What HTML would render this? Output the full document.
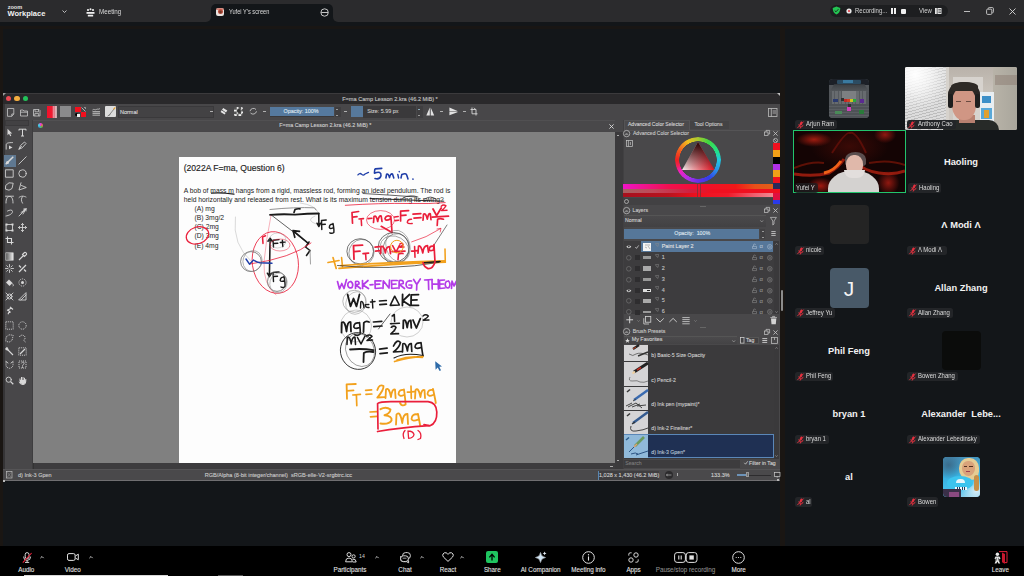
<!DOCTYPE html>
<html><head><meta charset="utf-8">
<style>
*{box-sizing:border-box;margin:0;padding:0}
html,body{width:1024px;height:576px;overflow:hidden;background:#131619;font-family:"Liberation Sans",sans-serif;color:#ddd}
.a{position:absolute}
.t{position:absolute;white-space:nowrap;line-height:1}
.tag{height:9.5px;background:#232528;border-radius:2.5px}
.tag .t{font-size:6.5px;color:#dcdcdc;transform:scaleX(0.92);transform-origin:0 0}
.gname{position:absolute;white-space:nowrap;line-height:1;font-size:9.3px;font-weight:bold;color:#f2f2f2;transform:translate(-50%,-42%)}
.tb{position:absolute;white-space:nowrap;line-height:1;font-size:6.3px;color:#ececec;transform:translateX(-50%);-webkit-text-stroke:0.08px currentColor}
.k{position:absolute;white-space:nowrap;line-height:1;font-size:5px;color:#d4d4d4;-webkit-text-stroke:0.12px currentColor}
svg{overflow:visible}
</style></head><body>
<!-- ZOOM TOP BAR -->
<div class="a" style="left:0;top:0;width:1024px;height:22px;background:#2b2b2d"></div>
<div class="t" style="left:7.8px;top:4.6px;font-size:5.6px;color:#e4e4e4;font-weight:bold;letter-spacing:-0.1px">zoom</div>
<div class="t" style="left:7.6px;top:10.2px;font-size:7.5px;color:#f2f2f2;font-weight:bold">Workplace</div>
<svg class="a" style="left:62px;top:10px" width="5" height="3" viewBox="0 0 5 3"><path d="M0.5 0.5 L2.5 2.5 L4.5 0.5" stroke="#cfcfcf" stroke-width="0.9" fill="none"/></svg>
<!-- meeting icon -->
<svg class="a" style="left:85.5px;top:7.5px" width="9" height="9" viewBox="0 0 9 9">
<circle cx="2" cy="2" r="1.1" fill="#eee"/><circle cx="7" cy="2" r="1.1" fill="#eee"/><circle cx="4.5" cy="1.2" r="1" fill="#eee"/>
<path d="M0.5 4 H8.5 V5.8 H0.5Z" fill="#eee"/><rect x="1.8" y="6.7" width="5.4" height="1.8" rx="0.6" fill="#eee"/></svg>
<div class="t" style="left:98.7px;top:9px;font-size:6.8px;color:#dadada;transform:scaleX(0.92);transform-origin:0 0">Meeting</div>
<!-- tab -->
<div class="a" style="left:211px;top:4px;width:122px;height:22px;background:#131619;border-radius:5px 5px 0 0"></div>
<div class="a" style="left:206px;top:17px;width:5px;height:5px;background:#131619"></div>
<div class="a" style="left:201px;top:12px;width:10px;height:10px;background:#2b2b2d;border-radius:0 0 5px 0"></div>
<div class="a" style="left:333px;top:17px;width:5px;height:5px;background:#131619"></div>
<div class="a" style="left:333px;top:12px;width:10px;height:10px;background:#2b2b2d;border-radius:0 0 0 5px"></div>
<div class="a" style="left:216px;top:7.8px;width:8px;height:8.4px;border-radius:2px;background:#e8e2de;overflow:hidden"><div class="a" style="left:1.5px;top:1.5px;width:5px;height:5px;border-radius:50%;background:radial-gradient(circle at 50% 60%,#5a3020 0,#b84a3a 50%,#d88070 100%)"></div><div class="a" style="left:0;top:0;width:8px;height:2px;background:#c85040;opacity:0.6"></div></div>
<div class="t" style="left:228.7px;top:8.4px;font-size:7px;color:#dcdcdc;transform:scaleX(0.81);transform-origin:0 0">Yufei Y's screen</div>
<svg class="a" style="left:320px;top:8px" width="9" height="9" viewBox="0 0 9 9"><circle cx="4.6" cy="4.5" r="3.7" stroke="#d8d8d8" stroke-width="0.9" fill="none"/><path d="M1.2 4.5 H8" stroke="#d8d8d8" stroke-width="0.9"/></svg>
<!-- recording pill -->
<div class="a" style="left:830px;top:4.7px;width:118px;height:12px;background:#1d1e20;border-radius:6px"></div>
<svg class="a" style="left:832px;top:6.2px" width="9" height="9" viewBox="0 0 9 9"><path d="M4.5 0.4 L8.3 1.9 C8.3 5.2 6.8 7.4 4.5 8.6 C2.2 7.4 0.7 5.2 0.7 1.9Z" fill="#23c552"/><path d="M2.7 4.6 L4 5.8 L6.4 3.2" stroke="#1d1e20" stroke-width="0.9" fill="none"/></svg>
<svg class="a" style="left:846px;top:8px" width="6" height="6" viewBox="0 0 6 6"><circle cx="3" cy="3" r="2.6" fill="#e8e8e8"/><circle cx="3" cy="3" r="1" fill="#e0303a"/></svg>
<div class="t" style="left:855.2px;top:7.6px;font-size:6.3px;color:#d4d4d4;transform:scaleX(0.95);transform-origin:0 0">Recording...</div>
<div class="a" style="left:891px;top:8px;width:2px;height:6px;background:#f0f0f0"></div>
<div class="a" style="left:894.3px;top:8px;width:2px;height:6px;background:#f0f0f0"></div>
<div class="a" style="left:901px;top:8.5px;width:5.3px;height:5.3px;background:#f0f0f0;border-radius:1px"></div>
<div class="t" style="left:919px;top:7.7px;font-size:6.3px;color:#d4d4d4;transform:scaleX(0.95);transform-origin:0 0">View</div>
<svg class="a" style="left:935px;top:8px" width="7" height="6" viewBox="0 0 7 6"><rect x="0" y="0" width="6.5" height="6" fill="#e4e4e4"/><path d="M2.2 0 V6 M3.4 1.5 H6 M3.4 3 H6 M3.4 4.5 H6" stroke="#1d1e20" stroke-width="0.6"/></svg>
<div class="a" style="left:964px;top:10.5px;width:6px;height:1px;background:#bdbdbd"></div>
<svg class="a" style="left:985.5px;top:7px" width="8" height="8" viewBox="0 0 8 8"><rect x="0.6" y="2.2" width="5.2" height="5.2" rx="1" stroke="#d0d0d0" stroke-width="0.9" fill="none"/><path d="M2.2 1.9 V1.6 A1 1 0 0 1 3.2 0.6 H6.4 A1 1 0 0 1 7.4 1.6 V4.8 A1 1 0 0 1 6.4 5.8" stroke="#d0d0d0" stroke-width="0.9" fill="none"/></svg>
<svg class="a" style="left:1009px;top:7.5px" width="7" height="7" viewBox="0 0 7 7"><path d="M0.5 0.5 L6.5 6.5 M6.5 0.5 L0.5 6.5" stroke="#d8d8d8" stroke-width="0.9"/></svg>

<!-- share frame strips -->
<div class="a" style="left:0;top:26.4px;width:1024px;height:2.6px;background:#191614"></div>
<div class="a" style="left:0;top:26px;width:3px;height:520px;background:#1a1613"></div>
<div class="a" style="left:780px;top:26px;width:5px;height:520px;background:#1a1613"></div>
<div class="a" style="left:781.2px;top:290px;width:2px;height:21px;background:#8c8c8c;border-radius:1px"></div>
<div class="a" style="left:3px;top:93px;width:777px;height:388px;background:#484749"></div>
<div class="a" style="left:3px;top:93px;width:777px;height:11px;background:#2a292b;border-top:1px solid #3b3a3c"></div>
<div class="a" style="left:3px;top:93px;width:3px;height:3px;background:#9a9a9a;clip-path:polygon(0 0,100% 0,0 100%)"></div>
<div class="a" style="left:777px;top:93px;width:3px;height:3px;background:#bdbdbd;clip-path:polygon(0 0,100% 0,100% 100%)"></div>
<div class="a" style="left:6.1000000000000005px;top:96px;width:5.4px;height:5.4px;border-radius:50%;background:#ec4a55"></div>
<div class="a" style="left:14.3px;top:96px;width:5.4px;height:5.4px;border-radius:50%;background:#f4ae40"></div>
<div class="a" style="left:22.5px;top:96px;width:5.4px;height:5.4px;border-radius:50%;background:#22c25a"></div>
<div class="k" style="left:342.2px;top:96.6px;font-size:5.6px;color:#c4c4c4">F=ma Camp Lesson 2.kra (46.2 MiB) *</div>
<svg class="a" style="left:7px;top:107.5px" width="7.5" height="9" viewBox="0 0 7.5 9"><path d="M0.5 0.5 H6.8 V6 L4.8 8.3 H0.5Z M6.8 6 H4.8 V8.3" stroke="#c8c8c8" stroke-width="0.8" fill="none"/></svg>
<svg class="a" style="left:20px;top:108.5px" width="8" height="7.5" viewBox="0 0 8 7.5"><path d="M0.5 1 H3 L4 2 H7.5 V7 H0.5Z M0.5 3.2 H7.5" stroke="#c8c8c8" stroke-width="0.8" fill="none"/></svg>
<svg class="a" style="left:33px;top:108.5px" width="7.5" height="7.5" viewBox="0 0 7.5 7.5"><path d="M0.5 0.5 H6 L7 1.5 V7 H0.5Z M2 0.5 V2.8 H5.5 V0.5 M1.8 7 V4.6 H5.7 V7" stroke="#c8c8c8" stroke-width="0.8" fill="none"/></svg>
<div class="a" style="left:46.5px;top:105.6px;width:10.8px;height:12px;background:repeating-linear-gradient(90deg,rgba(255,255,255,0) 0 1.6px,rgba(255,255,255,0.25) 1.6px 2.2px),linear-gradient(90deg,#f0102a 0,#f01a30 45%,#e07080 70%,#c8b8b8 100%)"></div>
<div class="a" style="left:60px;top:106.3px;width:10.8px;height:11px;background:#8a8a8c"></div>
<div class="a" style="left:75px;top:106.5px;width:5.5px;height:5.5px;background:#f2101e"></div>
<div class="a" style="left:80.5px;top:111.8px;width:5.7px;height:5.5px;background:#f2101e"></div>
<div class="a" style="left:75px;top:112.5px;width:3px;height:3px;background:#000;border-radius:50%"></div>
<div class="a" style="left:77px;top:114px;width:3px;height:3px;background:#eee"></div>
<svg class="a" style="left:81px;top:106.5px" width="5" height="5" viewBox="0 0 5 5"><path d="M0.5 0.5 L4.5 4.5" stroke="#bbb" stroke-width="0.9"/><path d="M3 0.5 H4.5 V2" stroke="#bbb" stroke-width="0.7" fill="none"/></svg>
<svg class="a" style="left:91.5px;top:107px" width="8.5" height="9" viewBox="0 0 8.5 9"><path d="M0.5 3 C2 1.5 3 3.5 4.3 2.5 C5.5 1.5 6.5 3 8 1.5" stroke="#c8c8c8" stroke-width="0.8" fill="none"/><rect x="0.5" y="4" width="7.5" height="1.3" fill="#aaa"/><rect x="0.5" y="5.8" width="7.5" height="1.3" fill="#aaa"/><rect x="0.5" y="7.6" width="7.5" height="1.3" fill="#999"/></svg>
<div class="a" style="left:105px;top:106px;width:11.2px;height:11.2px;background:#dcdcdc;border-radius:1px"></div>
<svg class="a" style="left:106px;top:106.5px" width="10" height="10" viewBox="0 0 10 10"><path d="M2.5 9 L8.8 1" stroke="#7a7a7a" stroke-width="0.9"/><path d="M7.6 2.4 L9.3 0.4" stroke="#e8a030" stroke-width="1.2"/><path d="M1.5 9.2 C2.5 8 3.5 8.5 4 7.5" stroke="#555" stroke-width="0.6" fill="none"/></svg>
<div class="a" style="left:117.5px;top:105.5px;width:96.5px;height:12.3px;background:#434244;border:0.5px solid #3a393b"></div>
<div class="k" style="left:120px;top:110px;font-size:5.5px;color:#dcdcdc">Normal</div>
<div class="a" style="left:209.5px;top:111px;width:3px;height:0.9px;background:#b0b0b0"></div>
<svg class="a" style="left:219.5px;top:107px" width="8" height="8" viewBox="0 0 8 8"><path d="M3.2 1 L7.3 3.6 L4.6 7.5 L0.6 5Z" fill="#e6e6e6"/><path d="M2 3.2 L6 5.8" stroke="#484749" stroke-width="0.8"/></svg>
<div class="a" style="left:234px;top:106.8px;width:9px;height:9px;background:conic-gradient(#eee 0 25%,#555 0 50%,#eee 0 75%,#555 0);background-size:4.5px 4.5px;border-radius:1.5px"></div>
<div class="a" style="left:236.5px;top:109.3px;width:4px;height:4px;border-radius:50%;background:#333"></div>
<svg class="a" style="left:248.5px;top:107px" width="8.5" height="8.5" viewBox="0 0 8.5 8.5"><path d="M7 2.5 A3.5 3.5 0 0 0 1 4.2 M1.5 6 A3.5 3.5 0 0 0 7.5 4.3" stroke="#c4c4c4" stroke-width="0.9" fill="none"/></svg>
<div class="a" style="left:263px;top:111px;width:3px;height:0.9px;background:#b0b0b0"></div>
<div class="a" style="left:270.4px;top:106.7px;width:63.5px;height:10.5px;background:#55799e;border-bottom:0.5px solid #3a393b"></div>
<div class="k" style="left:283.5px;top:109.2px;font-size:5.4px;color:#dde6ee">Opacity: 100%</div>
<div class="a" style="left:334.5px;top:106.7px;width:6px;height:10.5px;background:#3f3e40"></div>
<div class="a" style="left:336.3px;top:108.5px;width:2px;height:0.7px;background:#999"></div><div class="a" style="left:336.3px;top:115px;width:2px;height:0.7px;background:#999"></div>
<div class="a" style="left:344px;top:111px;width:3px;height:0.9px;background:#b0b0b0"></div>
<div class="a" style="left:351px;top:106.3px;width:11.8px;height:11px;background:#57799c"></div>
<div class="a" style="left:363px;top:105.7px;width:53px;height:12px;background:#3a393b"></div>
<div class="k" style="left:367.2px;top:109px;font-size:5.4px;color:#c9c9c9">Size: 5.99 px</div>
<div class="a" style="left:416.5px;top:105.7px;width:6px;height:12px;background:#3f3e40"></div>
<div class="a" style="left:418.4px;top:108.5px;width:2px;height:0.7px;background:#8ab"></div><div class="a" style="left:418.4px;top:114.7px;width:2px;height:0.7px;background:#999"></div>
<svg class="a" style="left:426px;top:107px" width="8.5" height="9" viewBox="0 0 8.5 9"><path d="M3.8 0.5 L0.3 8.5 H3.8Z M4.7 0.5 L8.2 8.5 H4.7Z" fill="#e2e2e2"/></svg>
<div class="a" style="left:440px;top:111px;width:3px;height:0.9px;background:#b0b0b0"></div>
<svg class="a" style="left:448.7px;top:107.3px" width="8.7" height="8.5" viewBox="0 0 8.7 8.5"><path d="M0.4 0.4 L8.5 3.9 V4.4 H0.4Z M0.4 4.9 H8.5 V5.2 L0.4 8.3Z" fill="#e2e2e2"/></svg>
<div class="a" style="left:462.5px;top:111px;width:3px;height:0.9px;background:#b0b0b0"></div>
<svg class="a" style="left:469.8px;top:107px" width="8" height="9" viewBox="0 0 8 9"><path d="M2 0.5 V6.8 H7.5 M0.5 2.5 H6 V8.5 M4 0.8 L5.5 2.3" stroke="#d6d6d6" stroke-width="0.9" fill="none"/></svg>
<svg class="a" style="left:767.5px;top:107.5px" width="9.5" height="9" viewBox="0 0 9.5 9"><rect x="0.5" y="0.5" width="8.5" height="8" stroke="#bcbcbc" stroke-width="0.8" fill="none"/><path d="M3.3 0.5 V8.5 M4.6 3 H8 M4.6 5 H8" stroke="#bcbcbc" stroke-width="0.8"/></svg>
<div class="a" style="left:3px;top:104px;width:1.5px;height:377px;background:#353436"></div>
<div class="a" style="left:5.3px;top:119.7px;width:24px;height:6.5px;background:#424143;border:0.5px solid #3a393b"></div>
<div class="a" style="left:32px;top:119.5px;width:0.8px;height:350px;background:#3e3d3f"></div>
<div class="a" style="left:32.5px;top:119.7px;width:582px;height:11.8px;background:#49484a;border-top:0.5px solid #515052"></div>
<div class="a" style="left:37.8px;top:122.6px;width:5.4px;height:5.4px;border-radius:50%;background:conic-gradient(#e040e0,#f06060,#60c040,#40a0e0,#40e0e0,#e040e0)"></div>
<div class="k" style="left:279.3px;top:123.4px;font-size:5.4px;color:#cfcfcf">F=ma Camp Lesson 2.kra (46.2 MiB) *</div>
<svg class="a" style="left:608.5px;top:123.5px" width="5" height="5" viewBox="0 0 5 5"><path d="M0.4 0.4 L4.6 4.6 M4.6 0.4 L0.4 4.6" stroke="#dcdcdc" stroke-width="0.9"/></svg>
<div class="a" style="left:32.5px;top:131.5px;width:582px;height:331.5px;background:#808080"></div>
<div class="a" style="left:614.5px;top:131.5px;width:8px;height:337px;background:#3b3a3c"></div>
<div class="a" style="left:616.8px;top:134.6px;width:2.5px;height:0.8px;background:#aaa"></div>
<div class="a" style="left:616.8px;top:459.5px;width:2.5px;height:0.8px;background:#aaa"></div>
<div class="a" style="left:32.5px;top:463px;width:582px;height:6px;background:#3d3c3e"></div>
<div class="a" style="left:33px;top:463px;width:1px;height:6px;background:#333"></div>
<div class="a" style="left:610.3px;top:465.8px;width:2.5px;height:0.8px;background:#aaa"></div>
<div class="a" style="left:3px;top:469px;width:777px;height:11.5px;background:#4a494b;border-top:0.5px solid #555456"></div>
<div class="a" style="left:3px;top:480.3px;width:777px;height:1px;background:#706f71"></div>
<svg class="a" style="left:6px;top:471px" width="6.5" height="7.5" viewBox="0 0 6.5 7.5"><rect x="0.4" y="0.4" width="5.6" height="6.6" stroke="#bbb" stroke-width="0.7" fill="none"/><path d="M1.5 1.5 L3.2 3.7 L5 1.5 M1.5 6 L3.2 3.7 L5 6" stroke="#999" stroke-width="0.5" fill="none"/></svg>
<div class="k" style="left:18px;top:472.5px;font-size:5.5px;color:#c8c8c8">d) Ink-3 Gpen</div>
<div class="k" style="left:204.7px;top:472.5px;font-size:5.55px;color:#c8c8c8">RGB/Alpha (8-bit integer/channel) &nbsp;sRGB-elle-V2-srgbtrc.icc</div>
<div class="a" style="left:597.5px;top:470.5px;width:61px;height:9px;background:#3f3e40;border-left:0.6px solid #5a86b0"></div>
<div class="k" style="left:599px;top:472.5px;font-size:5.5px;color:#d0d0d0">1,028 x 1,430 (46.2 MiB)</div>
<div class="a" style="left:665px;top:471px;width:8px;height:8px;border-radius:50%;background:#2c2b2d"></div>
<svg class="a" style="left:666px;top:473px" width="6" height="4" viewBox="0 0 6 4"><path d="M0.5 2 H5.5 M1.5 0.8 L0.5 2 L1.5 3.2" stroke="#ccc" stroke-width="0.6" fill="none"/></svg>
<div class="a" style="left:677px;top:473px;width:0.6px;height:3px;background:#aaa"></div>
<div class="k" style="left:711px;top:472.5px;font-size:5.5px;color:#d0d0d0">133.3%</div>
<div class="a" style="left:736.5px;top:474.6px;width:34px;height:1px;background:#2d2c2e"></div>
<div class="a" style="left:736.5px;top:474.4px;width:9px;height:1.3px;background:#6d93b8"></div>
<div class="a" style="left:745.5px;top:472.3px;width:3px;height:5px;background:#6a6a6c;border:0.5px solid #999"></div>
<svg class="a" style="left:774px;top:472px" width="6.5" height="6" viewBox="0 0 6.5 6"><rect x="0.4" y="0.4" width="5.6" height="4" stroke="#ccc" stroke-width="0.7" fill="#3a393b"/><path d="M3.2 4.4 V5.6" stroke="#ccc" stroke-width="0.7"/></svg>
<div class="a" style="left:777px;top:479px;width:2px;height:2px;background:#bbb"></div>
<div class="a" style="left:3px;top:479.5px;width:2px;height:2px;background:#bbb"></div>
<svg width="0" height="0" style="position:absolute"><defs><linearGradient id="gr"><stop offset="0" stop-color="#555"/><stop offset="1" stop-color="#eee"/></linearGradient></defs></svg>
<div class="a" style="left:3.8px;top:154.8px;width:11.8px;height:12px;background:#5f7891"></div>
<svg class="a" style="left:4.9px;top:128.0px" width="9" height="9" viewBox="0 0 9 9"><path d="M2.5 0.8 V7.3 L4 5.8 L5.3 8.3 L6.3 7.8 L5.1 5.4 H7.2Z" fill="#d8d8d8"/></svg>
<svg class="a" style="left:17.8px;top:128.0px" width="9" height="9" viewBox="0 0 9 9"><path d="M1 1.2 H8 M4.5 1.2 V8 M3 8 H6 M1 1.2 V2.6 M8 1.2 V2.6" stroke="#d8d8d8" stroke-width="1" fill="none"/></svg>
<svg class="a" style="left:4.9px;top:140.8px" width="9" height="9" viewBox="0 0 9 9"><path d="M1.2 8.2 V4 C1.2 2 3 1.6 7.5 1.6" stroke="#d8d8d8" stroke-width="0.85" fill="none" stroke-linecap="round" stroke-linejoin="round"/><path d="M4 4.5 L7.5 6.5 L4 8.3Z" fill="#d8d8d8"/></svg>
<svg class="a" style="left:17.8px;top:140.8px" width="9" height="9" viewBox="0 0 9 9"><path d="M1 8 L2.5 4.5 L6.5 1 L8 2.5 L4.5 6.5Z M1 8 L3.5 5.5" stroke="#d8d8d8" stroke-width="0.85" fill="none" stroke-linecap="round" stroke-linejoin="round"/></svg>
<svg class="a" style="left:4.9px;top:156.1px" width="9" height="9" viewBox="0 0 9 9"><path d="M1.2 7.8 L7.8 1.2" stroke="#d8d8d8" stroke-width="1.6" stroke-linecap="round"/><circle cx="2.5" cy="6.5" r="1.5" fill="#d8d8d8"/></svg>
<svg class="a" style="left:17.8px;top:156.1px" width="9" height="9" viewBox="0 0 9 9"><path d="M0.8 8.2 L8.2 0.8" stroke="#d8d8d8" stroke-width="0.85" fill="none" stroke-linecap="round" stroke-linejoin="round"/></svg>
<svg class="a" style="left:4.9px;top:169.1px" width="9" height="9" viewBox="0 0 9 9"><rect x="0.8" y="0.8" width="7.4" height="7.4" stroke="#d8d8d8" stroke-width="0.85" fill="none" stroke-linecap="round" stroke-linejoin="round"/></svg>
<svg class="a" style="left:17.8px;top:169.1px" width="9" height="9" viewBox="0 0 9 9"><circle cx="4.5" cy="4.5" r="3.7" stroke="#d8d8d8" stroke-width="0.85" fill="none" stroke-linecap="round" stroke-linejoin="round"/></svg>
<svg class="a" style="left:4.9px;top:182.0px" width="9" height="9" viewBox="0 0 9 9"><path d="M1 3.2 L4 0.8 L8.2 1.2 L7 6.5 L4 8.2 L0.8 7.2Z" stroke="#d8d8d8" stroke-width="0.85" fill="none" stroke-linecap="round" stroke-linejoin="round"/></svg>
<svg class="a" style="left:17.8px;top:182.0px" width="9" height="9" viewBox="0 0 9 9"><path d="M3 0.8 L1 8 L8.3 5.5 L3.5 3.5" stroke="#d8d8d8" stroke-width="0.85" fill="none" stroke-linecap="round" stroke-linejoin="round"/></svg>
<svg class="a" style="left:4.9px;top:194.9px" width="9" height="9" viewBox="0 0 9 9"><path d="M1 8 C1 3 2.5 1.5 4.5 1.5 C6.5 1.5 8 3 8 8 M0.5 1.2 H8.5" stroke="#d8d8d8" stroke-width="0.85" fill="none" stroke-linecap="round" stroke-linejoin="round"/></svg>
<svg class="a" style="left:17.8px;top:194.9px" width="9" height="9" viewBox="0 0 9 9"><path d="M1 2.5 C3 0.5 6 1 8 2 M4.5 1.6 C3 3.5 3 6 4.5 8.2" stroke="#d8d8d8" stroke-width="0.85" fill="none" stroke-linecap="round" stroke-linejoin="round"/></svg>
<svg class="a" style="left:4.9px;top:208.0px" width="9" height="9" viewBox="0 0 9 9"><path d="M1 8 C4 7.5 7.5 6 7.5 3.5 C7.5 1.5 4.5 1.8 2.5 3" stroke="#d8d8d8" stroke-width="0.85" fill="none" stroke-linecap="round" stroke-linejoin="round"/></svg>
<svg class="a" style="left:17.8px;top:208.0px" width="9" height="9" viewBox="0 0 9 9"><path d="M8 1 L1 8 M8 1 L3 4.5 M8 1 L5 6 M8 1 L5.5 2 M6 0.8 L8 1 L8 3" stroke="#d8d8d8" stroke-width="0.85" fill="none" stroke-linecap="round" stroke-linejoin="round"/></svg>
<svg class="a" style="left:4.9px;top:223.0px" width="9" height="9" viewBox="0 0 9 9"><rect x="1.5" y="1.5" width="6" height="6" stroke="#d8d8d8" stroke-width="0.85" fill="none" stroke-linecap="round" stroke-linejoin="round"/><rect x="0.5" y="0.5" width="2" height="2" fill="#d8d8d8"/><rect x="6.5" y="0.5" width="2" height="2" fill="#d8d8d8"/><rect x="0.5" y="6.5" width="2" height="2" fill="#d8d8d8"/><rect x="6.5" y="6.5" width="2" height="2" fill="#d8d8d8"/></svg>
<svg class="a" style="left:17.8px;top:223.0px" width="9" height="9" viewBox="0 0 9 9"><path d="M4.5 0.5 V8.5 M0.5 4.5 H8.5 M3.3 1.7 L4.5 0.5 L5.7 1.7 M3.3 7.3 L4.5 8.5 L5.7 7.3 M1.7 3.3 L0.5 4.5 L1.7 5.7 M7.3 3.3 L8.5 4.5 L7.3 5.7" stroke="#d8d8d8" stroke-width="0.85" fill="none" stroke-linecap="round" stroke-linejoin="round"/></svg>
<svg class="a" style="left:4.9px;top:236.1px" width="9" height="9" viewBox="0 0 9 9"><path d="M2.5 0.5 V6.5 H8.5 M0.5 2.5 H6.5 V8.5" stroke="#d8d8d8" stroke-width="1.1" fill="none"/></svg>
<svg class="a" style="left:4.9px;top:251.5px" width="9" height="9" viewBox="0 0 9 9"><rect x="0.8" y="0.8" width="7.4" height="7.4" fill="url(#gr)" stroke="#d8d8d8" stroke-width="0.6"/></svg>
<svg class="a" style="left:17.8px;top:251.5px" width="9" height="9" viewBox="0 0 9 9"><path d="M1 8 L5.5 3.5 M4.5 2.5 L6.5 0.5 C7.5 0 9 1.5 8.5 2.5 L6.5 4.5Z" stroke="#d8d8d8" stroke-width="1.1" fill="none"/></svg>
<svg class="a" style="left:4.9px;top:264.25px" width="9" height="9" viewBox="0 0 9 9"><path d="M4.5 0.5 V3 M4.5 6 V8.5 M0.5 4.5 H3 M6 4.5 H8.5 M1.7 1.7 L3 3 M7.3 7.3 L6 6 M7.3 1.7 L6 3 M1.7 7.3 L3 6" stroke="#d8d8d8" stroke-width="0.85" fill="none" stroke-linecap="round" stroke-linejoin="round"/></svg>
<svg class="a" style="left:17.8px;top:264.25px" width="9" height="9" viewBox="0 0 9 9"><path d="M1 8 L8 1 M1 1.5 L3 3.5 M6 5.5 L8 7.5" stroke="#d8d8d8" stroke-width="1.3" fill="none"/></svg>
<svg class="a" style="left:4.9px;top:277.5px" width="9" height="9" viewBox="0 0 9 9"><path d="M1 4.5 L4 1.5 L7.5 5 L4.5 8Z" fill="#d8d8d8"/><path d="M7.5 5.5 C8.5 7 8.5 8 7.8 8.3" stroke="#d8d8d8" stroke-width="0.9" fill="none"/></svg>
<svg class="a" style="left:17.8px;top:277.5px" width="9" height="9" viewBox="0 0 9 9"><circle cx="4.5" cy="4.5" r="3.6" stroke="#d8d8d8" stroke-width="0.85" fill="none" stroke-dasharray="1.1 0.9"/><circle cx="4.5" cy="4.5" r="1.5" fill="#d8d8d8"/></svg>
<svg class="a" style="left:4.9px;top:291.75px" width="9" height="9" viewBox="0 0 9 9"><path d="M1 1 L8 8 M8 1 L1 8" stroke="#d8d8d8" stroke-width="0.85" fill="none" stroke-linecap="round" stroke-linejoin="round"/><circle cx="4.5" cy="4.5" r="2.5" stroke="#d8d8d8" stroke-width="0.85" fill="none" stroke-linecap="round" stroke-linejoin="round"/></svg>
<svg class="a" style="left:17.8px;top:291.75px" width="9" height="9" viewBox="0 0 9 9"><path d="M1 8 H8 L8 1Z M3 8 L8 3" stroke="#d8d8d8" stroke-width="0.85" fill="none" stroke-linecap="round" stroke-linejoin="round"/></svg>
<svg class="a" style="left:4.9px;top:306.3px" width="9" height="9" viewBox="0 0 9 9"><path d="M3 8.3 L4.5 5 M2 4.5 L6.5 2 M5 0.8 L8 3.5 M2.5 3.5 L5.5 6.5" stroke="#d8d8d8" stroke-width="1.1" fill="none"/></svg>
<svg class="a" style="left:4.9px;top:321.3px" width="9" height="9" viewBox="0 0 9 9"><rect x="0.8" y="0.8" width="7.4" height="7.4" stroke="#d8d8d8" stroke-width="0.85" fill="none" stroke-dasharray="1.1 0.9"/></svg>
<svg class="a" style="left:17.8px;top:321.3px" width="9" height="9" viewBox="0 0 9 9"><circle cx="4.5" cy="4.5" r="3.7" stroke="#d8d8d8" stroke-width="0.85" fill="none" stroke-dasharray="1.1 0.9"/></svg>
<svg class="a" style="left:4.9px;top:334.1px" width="9" height="9" viewBox="0 0 9 9"><path d="M1 3.2 L4 0.8 L8.2 1.2 L7 6.5 L4 8.2 L0.8 7.2Z" stroke="#d8d8d8" stroke-width="0.85" fill="none" stroke-dasharray="1.1 0.9"/></svg>
<svg class="a" style="left:17.8px;top:334.1px" width="9" height="9" viewBox="0 0 9 9"><path d="M1.5 3 C2 0.5 6 0.5 7 3 C8 5 5.5 5 6 7 L7.5 8" stroke="#d8d8d8" stroke-width="0.85" fill="none" stroke-dasharray="1.1 0.9"/></svg>
<svg class="a" style="left:4.9px;top:347.3px" width="9" height="9" viewBox="0 0 9 9"><path d="M1 1 L3.5 3.5 M2 1 V0 M1 2 H0 M3.5 3.5 L8 8" stroke="#d8d8d8" stroke-width="1.1" fill="none"/><circle cx="2.2" cy="2.2" r="1.2" fill="#d8d8d8"/></svg>
<svg class="a" style="left:17.8px;top:347.3px" width="9" height="9" viewBox="0 0 9 9"><rect x="0.8" y="0.8" width="7.4" height="7.4" stroke="#d8d8d8" stroke-width="0.85" fill="none" stroke-dasharray="1.1 0.9"/><path d="M2 7 L7 2" stroke="#d8d8d8" stroke-width="1.2"/></svg>
<svg class="a" style="left:4.9px;top:360.1px" width="9" height="9" viewBox="0 0 9 9"><path d="M1 1.5 V5 C1 7 3 8.3 4.5 8.3 C6 8.3 8 7 8 5 V1.5" stroke="#d8d8d8" stroke-width="0.85" fill="none" stroke-dasharray="1.1 0.9"/><path d="M1 1.5 L3 3 M8 1.5 L6 3" stroke="#d8d8d8" stroke-width="0.85" fill="none" stroke-linecap="round" stroke-linejoin="round"/></svg>
<svg class="a" style="left:17.8px;top:360.1px" width="9" height="9" viewBox="0 0 9 9"><path d="M1 1 H8 V8 H1Z" stroke="#d8d8d8" stroke-width="0.85" fill="none" stroke-dasharray="1.1 0.9"/><path d="M3.5 3 C4 1.5 6.5 1.8 6 3.5 C5.5 4.8 4.5 4.8 4.5 6 M4.5 7 V7.5" stroke="#d8d8d8" stroke-width="0.85" fill="none" stroke-linecap="round" stroke-linejoin="round"/></svg>
<svg class="a" style="left:4.9px;top:375.8px" width="9" height="9" viewBox="0 0 9 9"><circle cx="3.7" cy="3.7" r="2.6" stroke="#d8d8d8" stroke-width="0.85" fill="none" stroke-linecap="round" stroke-linejoin="round"/><path d="M5.6 5.6 L8.3 8.3" stroke="#d8d8d8" stroke-width="1.3"/></svg>
<svg class="a" style="left:17.8px;top:375.8px" width="9" height="9" viewBox="0 0 9 9"><path d="M2 5 V2.5 M3.5 4.5 V1 M5 4.5 V1 M6.5 4.5 V1.8 M1.2 5.5 C1.5 7.5 3 8.5 5 8.5 C7 8.5 7.8 7 7.8 4.5 V3" stroke="#d8d8d8" stroke-width="1" fill="none"/><path d="M2 4 H7.8 V7 C7 8.5 3 8.5 2 7Z" fill="#d8d8d8"/></svg>
<div class="a" style="left:179px;top:157px;width:277px;height:306px;background:#fdfdfd"></div>
<div class="t" style="left:183.7px;top:164px;font-size:8.6px;color:#222;-webkit-text-stroke:0.15px #222">(2022A F=ma, Question 6)</div>
<div class="t" style="left:183.7px;top:187.7px;font-size:6.75px;color:#222">A bob of mass m hangs from a rigid, massless rod, forming an ideal pendulum. The rod is</div>
<div class="t" style="left:183.7px;top:197.1px;font-size:6.75px;color:#222">held horizontally and released from rest. What is its maximum tension during its swing?</div>
<div class="t" style="left:194.4px;top:206.00px;font-size:6.75px;color:#222">(A) mg</div>
<div class="t" style="left:194.4px;top:215.15px;font-size:6.75px;color:#222">(B) 3mg/2</div>
<div class="t" style="left:194.4px;top:224.30px;font-size:6.75px;color:#222">(C) 2mg</div>
<div class="t" style="left:194.4px;top:233.45px;font-size:6.75px;color:#222">(D) 3mg</div>
<div class="t" style="left:194.4px;top:242.60px;font-size:6.75px;color:#222">(E) 4mg</div>
<svg class="a" style="left:0;top:0;clip-path:inset(157px 568px 113px 179px)" width="1024" height="576" viewBox="0 0 1024 576"><path d="M357.9,174.9 Q360,172.5 361.5,174.2 Q363,176 365,174 L368.5,172.4" stroke="#1e3da8" stroke-width="1.30" fill="none" stroke-linecap="round" stroke-linejoin="round" opacity="1"/><path d="M381.8,168.4 L375.3,168.9 M374.8,169.4 L374.4,173.2 Q381.5,170.5 381,175.8 Q380,179.8 375,178.6" stroke="#1e3da8" stroke-width="1.56" fill="none" stroke-linecap="round" stroke-linejoin="round" opacity="1"/><path d="M385.9,178 L386.6,174.2 Q388.3,173 389.5,177.6 Q390.5,173.2 392.5,174 L393.8,178" stroke="#1e3da8" stroke-width="1.56" fill="none" stroke-linecap="round" stroke-linejoin="round" opacity="1"/><path d="M397.8,174.4 L398.6,178 M399.2,171.6 L399.3,171.7" stroke="#1e3da8" stroke-width="1.43" fill="none" stroke-linecap="round" stroke-linejoin="round" opacity="1"/><path d="M401,178 L401.8,174.4 Q406,172.8 406.7,175 L408,179" stroke="#1e3da8" stroke-width="1.56" fill="none" stroke-linecap="round" stroke-linejoin="round" opacity="1"/><path d="M412.9,179 L413,179.1" stroke="#1e3da8" stroke-width="1.56" fill="none" stroke-linecap="round" stroke-linejoin="round" opacity="1"/><path d="M211.5,193.2 Q222,192.5 234,194.2" stroke="#1b1b1b" stroke-width="1.17" fill="none" stroke-linecap="round" stroke-linejoin="round" opacity="1"/><path d="M363,193.5 Q390,195 416.4,197" stroke="#1b1b1b" stroke-width="0.69" fill="none" stroke-linecap="round" stroke-linejoin="round" opacity="1"/><path d="M370,198.5 Q405,200 443.8,201.2" stroke="#1b1b1b" stroke-width="0.92" fill="none" stroke-linecap="round" stroke-linejoin="round" opacity="1"/><path d="M403,198 Q410,194 418,197 M425,199 Q430,195 436,199" stroke="#1b1b1b" stroke-width="0.69" fill="none" stroke-linecap="round" stroke-linejoin="round" opacity="1"/><path d="M345.3,205.3 Q380,203 410,203.5 Q430,204 445.2,202.6" stroke="#ea1f3b" stroke-width="0.80" fill="none" stroke-linecap="round" stroke-linejoin="round" opacity="1"/><ellipse cx="197.5" cy="235.4" rx="11.5" ry="8.3" transform="rotate(-18 197.5 235.4)" stroke="#ea1f3b" stroke-width="1.2" fill="none" opacity="1"/><path d="M235.4,217 Q232,245 252,262" stroke="#8a8a8a" stroke-width="0.46" fill="none" stroke-linecap="round" stroke-linejoin="round" opacity="0.7"/><path d="M270,209.5 Q295,207 314.4,207.8 L316,210" stroke="#8a8a8a" stroke-width="0.92" fill="none" stroke-linecap="round" stroke-linejoin="round" opacity="1"/><path d="M294,212.5 L295,209.5 Q297,208.5 300,208.8" stroke="#1b1b1b" stroke-width="1.69" fill="none" stroke-linecap="round" stroke-linejoin="round" opacity="1"/><path d="M270,214.8 Q283,213.8 295,214.6 Q308,213.6 318.75,213.5" stroke="#1b1b1b" stroke-width="1.82" fill="none" stroke-linecap="round" stroke-linejoin="round" opacity="1"/><path d="M318.75,213.5 L318.9,226.2 M317,223.2 L318.9,226.5 L320.6,223.2" stroke="#1b1b1b" stroke-width="1.56" fill="none" stroke-linecap="round" stroke-linejoin="round" opacity="1"/><path d="M321.5,220.5 L321.8,229.5 M321.5,220.5 L326.2,220 M321.8,224.5 L325.3,224.2" stroke="#1b1b1b" stroke-width="1.43" fill="none" stroke-linecap="round" stroke-linejoin="round" opacity="1"/><path d="M333,224.3 Q329.5,223.5 329.3,227.5 Q330,229.3 333,227.8 M333,223.5 Q334.3,230 333.8,232.5 Q332,234 329.8,232.8" stroke="#1b1b1b" stroke-width="1.43" fill="none" stroke-linecap="round" stroke-linejoin="round" opacity="1"/><path d="M271,214.8 L308.3,243.4" stroke="#1b1b1b" stroke-width="0.69" fill="none" stroke-linecap="round" stroke-linejoin="round" opacity="1"/><path d="M293,230.6 L308.3,243.4 M293,230.6 L299.5,231.4 M293,230.6 L294.8,237.3" stroke="#1b1b1b" stroke-width="1.69" fill="none" stroke-linecap="round" stroke-linejoin="round" opacity="1"/><path d="M309,242 L305.5,247 L310,250.5 L306.5,255.5" stroke="#1b1b1b" stroke-width="1.56" fill="none" stroke-linecap="round" stroke-linejoin="round" opacity="1"/><path d="M310,250 L310.5,264" stroke="#8a8a8a" stroke-width="0.80" fill="none" stroke-linecap="round" stroke-linejoin="round" opacity="1"/><path d="M270.1,238.2 L269.4,276.4 M268,241.2 L270.1,238.2 L272.2,241.2 M267.4,273.2 L269.4,276.6 L271.5,273.2" stroke="#1b1b1b" stroke-width="1.56" fill="none" stroke-linecap="round" stroke-linejoin="round" opacity="1"/><path d="M273,240.3 L273.5,247 M273,240.3 L279,239.6 M273.5,243.5 L277.8,243.2 M280.3,242.5 L285.2,242.1 M282.4,240.2 L282.8,246.6" stroke="#1b1b1b" stroke-width="1.43" fill="none" stroke-linecap="round" stroke-linejoin="round" opacity="1"/><path d="M273,272.5 L273.5,281.5 M273,272.5 L279,272 M273.5,276.5 L277.5,276.2" stroke="#1b1b1b" stroke-width="1.43" fill="none" stroke-linecap="round" stroke-linejoin="round" opacity="1"/><path d="M284,277.2 Q280.5,276.5 280.2,280.5 Q281,282 284,281 M284,276.3 Q285.3,283 285,286.5 Q283,288.3 281,287" stroke="#1b1b1b" stroke-width="1.43" fill="none" stroke-linecap="round" stroke-linejoin="round" opacity="1"/><ellipse cx="275.3" cy="262.5" rx="23" ry="31" transform="rotate(-8 275.3 262.5)" stroke="#ea1f3b" stroke-width="0.8" fill="none" opacity="1"/><path d="M311,243 Q292,258 250,264" stroke="#ea1f3b" stroke-width="0.80" fill="none" stroke-linecap="round" stroke-linejoin="round" opacity="1"/><ellipse cx="280" cy="245" rx="10" ry="6" transform="rotate(0 280 245)" stroke="#ea1f3b" stroke-width="0.6" fill="none" opacity="0.8"/><path d="M271,215.5 Q266,240 264,262 Q263,285 276,295" stroke="#ea1f3b" stroke-width="0.57" fill="none" stroke-linecap="round" stroke-linejoin="round" opacity="0.6"/><path d="M263,243.4 L262.5,237 L265.5,235.8" stroke="#ea1f3b" stroke-width="1.56" fill="none" stroke-linecap="round" stroke-linejoin="round" opacity="1"/><ellipse cx="251" cy="261.6" rx="10.4" ry="10" transform="rotate(0 251 261.6)" stroke="#555" stroke-width="0.7" fill="none" opacity="1"/><ellipse cx="252.5" cy="261" rx="9.5" ry="10.5" transform="rotate(20 252.5 261)" stroke="#8a8a8a" stroke-width="0.6" fill="none" opacity="1"/><ellipse cx="277" cy="281.6" rx="9.5" ry="9.8" transform="rotate(0 277 281.6)" stroke="#555" stroke-width="0.7" fill="none" opacity="1"/><ellipse cx="278.5" cy="283" rx="8.6" ry="10" transform="rotate(15 278.5 283)" stroke="#8a8a8a" stroke-width="0.5" fill="none" opacity="1"/><ellipse cx="277.5" cy="240.5" rx="8.5" ry="7.5" transform="rotate(0 277.5 240.5)" stroke="#8a8a8a" stroke-width="0.5" fill="none" opacity="0.7"/><path d="M246,259 L249.5,264.2 L253.5,260 Q257,262.5 260,262.8 L272,263.2" stroke="#1e3da8" stroke-width="1.43" fill="none" stroke-linecap="round" stroke-linejoin="round" opacity="1"/><path d="M300,203 Q315,205 318,212 M315,216 Q305,220 316,224" stroke="#8a8a8a" stroke-width="0.57" fill="none" stroke-linecap="round" stroke-linejoin="round" opacity="0.6"/><path d="M352,212.5 L352.5,223.2 M352,212.5 L358.6,211.5 M352.5,217.2 L357,216.7" stroke="#ea1f3b" stroke-width="1.69" fill="none" stroke-linecap="round" stroke-linejoin="round" opacity="1"/><path d="M359,219 L363.5,218.6 M361.2,219 L361.6,225.5" stroke="#ea1f3b" stroke-width="1.56" fill="none" stroke-linecap="round" stroke-linejoin="round" opacity="1"/><path d="M368,218.6 L372,218.2" stroke="#ea1f3b" stroke-width="1.56" fill="none" stroke-linecap="round" stroke-linejoin="round" opacity="1"/><path d="M373.5,222.5 L374,216.5 Q376.5,214.8 377.7,221.5 Q378.7,215.2 381.2,216 L382,221.5" stroke="#ea1f3b" stroke-width="1.69" fill="none" stroke-linecap="round" stroke-linejoin="round" opacity="1"/><path d="M390,216.2 Q386,215 385,218.5 Q385.5,221.5 390.3,219 L390.8,216 Q391.6,225 392,232.3 M381.2,226.3 L392,232.5" stroke="#ea1f3b" stroke-width="1.69" fill="none" stroke-linecap="round" stroke-linejoin="round" opacity="1"/><path d="M394.6,217.1 L398.2,216.6 M395,220.6 L398.6,220.2" stroke="#ea1f3b" stroke-width="1.56" fill="none" stroke-linecap="round" stroke-linejoin="round" opacity="1"/><path d="M400.6,211.2 L400.6,221 M400.6,211.2 L408.6,210.6 M400.6,215.6 L406,215.1" stroke="#ea1f3b" stroke-width="1.69" fill="none" stroke-linecap="round" stroke-linejoin="round" opacity="1"/><path d="M411.5,219.2 Q407.5,219 407.3,222.5 Q408,224 412.2,223.5" stroke="#ea1f3b" stroke-width="1.43" fill="none" stroke-linecap="round" stroke-linejoin="round" opacity="1"/><path d="M413,214.2 L420.8,213.6 M414,218.2 L421,217.6" stroke="#ea1f3b" stroke-width="1.69" fill="none" stroke-linecap="round" stroke-linejoin="round" opacity="1"/><path d="M423,220.2 L423.5,214.2 Q426,212.8 427.3,219.2 Q428.3,213 430.3,213.8 L431,219.6" stroke="#ea1f3b" stroke-width="1.69" fill="none" stroke-linecap="round" stroke-linejoin="round" opacity="1"/><path d="M433,209 L436.6,215.6 L441.2,208" stroke="#ea1f3b" stroke-width="1.82" fill="none" stroke-linecap="round" stroke-linejoin="round" opacity="1"/><path d="M441.2,206.2 Q443.5,204 446,205.8 Q445,208 441.6,210.6 L447,210.2" stroke="#ea1f3b" stroke-width="1.43" fill="none" stroke-linecap="round" stroke-linejoin="round" opacity="1"/><path d="M432,217.2 L448.5,216.2" stroke="#ea1f3b" stroke-width="1.69" fill="none" stroke-linecap="round" stroke-linejoin="round" opacity="1"/><path d="M437.2,225.5 L437.6,219.2 Q440,218 443.5,219.2" stroke="#ea1f3b" stroke-width="1.69" fill="none" stroke-linecap="round" stroke-linejoin="round" opacity="1"/><ellipse cx="380.5" cy="220" rx="14" ry="9.4" transform="rotate(0 380.5 220)" stroke="#ea1f3b" stroke-width="0.6" fill="none" opacity="1"/><path d="M411.7,241.9 Q426,238 440.6,228.6 M437,229 L441,228.3 L440.2,232" stroke="#ea1f3b" stroke-width="0.69" fill="none" stroke-linecap="round" stroke-linejoin="round" opacity="1"/><ellipse cx="360.2" cy="251.3" rx="13.3" ry="12.6" transform="rotate(0 360.2 251.3)" stroke="#3a3a3a" stroke-width="0.7" fill="none" opacity="1"/><ellipse cx="361.5" cy="252.5" rx="12.5" ry="13.2" transform="rotate(20 361.5 252.5)" stroke="#555" stroke-width="0.5" fill="none" opacity="1"/><ellipse cx="393.7" cy="247.3" rx="15.6" ry="14.8" transform="rotate(0 393.7 247.3)" stroke="#3a3a3a" stroke-width="0.7" fill="none" opacity="1"/><ellipse cx="396" cy="249" rx="13" ry="15.5" transform="rotate(10 396 249)" stroke="#555" stroke-width="0.6" fill="none" opacity="1"/><ellipse cx="398" cy="246" rx="12" ry="16" transform="rotate(-15 398 246)" stroke="#777" stroke-width="0.5" fill="none" opacity="1"/><ellipse cx="394.5" cy="249" rx="15" ry="12.5" transform="rotate(30 394.5 249)" stroke="#666" stroke-width="0.5" fill="none" opacity="1"/><path d="M434,245 L447,225" stroke="#1b1b1b" stroke-width="0.57" fill="none" stroke-linecap="round" stroke-linejoin="round" opacity="1"/><path d="M339,268.4 Q390,264 445.3,262.2 M341,265.5 Q395,262 445,260.8" stroke="#f2a11d" stroke-width="1.69" fill="none" stroke-linecap="round" stroke-linejoin="round" opacity="1"/><path d="M341.6,257.6 L342.6,268 M445,249 L445.3,262" stroke="#f2a11d" stroke-width="1.56" fill="none" stroke-linecap="round" stroke-linejoin="round" opacity="1"/><path d="M328,262.5 L339,260.5 M333,257.6 L336.2,268.4" stroke="#f2a11d" stroke-width="1.69" fill="none" stroke-linecap="round" stroke-linejoin="round" opacity="1"/><path d="M337.5,265.5 Q390,271 439,262.4" stroke="#1b1b1b" stroke-width="0.69" fill="none" stroke-linecap="round" stroke-linejoin="round" opacity="1"/><path d="M424,262.8 L440,261.5" stroke="#1b1b1b" stroke-width="1.56" fill="none" stroke-linecap="round" stroke-linejoin="round" opacity="1"/><path d="M353.5,245.6 L354,259.2 M353.5,245.6 L362.5,245.1 M354,251.6 L360,251.1" stroke="#ea1f3b" stroke-width="1.82" fill="none" stroke-linecap="round" stroke-linejoin="round" opacity="1"/><path d="M363,253.6 L368.6,253.1 M365.6,253.6 L366,259.6" stroke="#ea1f3b" stroke-width="1.56" fill="none" stroke-linecap="round" stroke-linejoin="round" opacity="1"/><path d="M375,247.1 L379.6,246.6 M375.5,251.1 L380,250.6" stroke="#ea1f3b" stroke-width="1.56" fill="none" stroke-linecap="round" stroke-linejoin="round" opacity="1"/><path d="M380.6,253.6 L381,246.6 Q384,245 385.4,253 Q386,246.5 389.5,246.6 L390.5,253.6" stroke="#ea1f3b" stroke-width="1.69" fill="none" stroke-linecap="round" stroke-linejoin="round" opacity="1"/><path d="M392.6,245.6 L396,252.2 L399.6,245.2 M400,243.8 Q402.6,242.2 403,244.8 L400,247.2 L404,247" stroke="#ea1f3b" stroke-width="1.56" fill="none" stroke-linecap="round" stroke-linejoin="round" opacity="1"/><path d="M392,251.6 L405,251.1 M398,259.6 L398.5,254.2 Q400,253 403,253.6" stroke="#ea1f3b" stroke-width="1.56" fill="none" stroke-linecap="round" stroke-linejoin="round" opacity="1"/><path d="M411.6,251.1 L418,250.6 M414.6,246.6 L415,257.2" stroke="#ea1f3b" stroke-width="1.56" fill="none" stroke-linecap="round" stroke-linejoin="round" opacity="1"/><path d="M418,253.2 L418.5,246.2 Q421,244.8 422.8,253 Q423.5,245.5 427.5,245.6 L428.5,252.2" stroke="#ea1f3b" stroke-width="1.69" fill="none" stroke-linecap="round" stroke-linejoin="round" opacity="1"/><path d="M433,246.2 Q429.5,245.5 429,249.8 Q430,251.5 433.5,250 L434,244.5 Q434.6,255 435,262 Q433,269 428,268.6 Q424,267 423,262.5" stroke="#ea1f3b" stroke-width="1.69" fill="none" stroke-linecap="round" stroke-linejoin="round" opacity="1"/><ellipse cx="396.9" cy="246.6" rx="6.3" ry="6.3" transform="rotate(0 396.9 246.6)" stroke="#f2a11d" stroke-width="1.0" fill="none" opacity="1"/><path d="M337.5,281.5 L339.5,289 L341.8,283.5 L344,288.5 L346.5,279.5" stroke="#b43ce8" stroke-width="1.69" fill="none" stroke-linecap="round" stroke-linejoin="round" opacity="1"/><path d="M350.8,281.5 Q347.5,282 347.8,285.5 Q348.8,289 352,287.5 Q354,284 350.8,281.5" stroke="#b43ce8" stroke-width="1.69" fill="none" stroke-linecap="round" stroke-linejoin="round" opacity="1"/><path d="M355.5,288.5 L355.6,281.5 Q359.5,280.5 359,284 L356,285 L360.5,288.5" stroke="#b43ce8" stroke-width="1.69" fill="none" stroke-linecap="round" stroke-linejoin="round" opacity="1"/><path d="M362.5,280.5 L362.6,288.5 M368,280.5 L363,285 L368.5,288.5" stroke="#b43ce8" stroke-width="1.69" fill="none" stroke-linecap="round" stroke-linejoin="round" opacity="1"/><path d="M370,284.8 L373,284.6" stroke="#b43ce8" stroke-width="1.69" fill="none" stroke-linecap="round" stroke-linejoin="round" opacity="1"/><path d="M381,280.8 L375,280.8 L375.2,288.5 L381.5,288 M375.1,284.4 L379.6,284.2" stroke="#b43ce8" stroke-width="1.69" fill="none" stroke-linecap="round" stroke-linejoin="round" opacity="1"/><path d="M383,288.5 L383.3,280.8 L389,288 L389.5,280" stroke="#b43ce8" stroke-width="1.69" fill="none" stroke-linecap="round" stroke-linejoin="round" opacity="1"/><path d="M397.2,280.5 L391.5,280.5 L391.7,288.5 L397.5,288 M391.6,284.3 L396,284" stroke="#b43ce8" stroke-width="1.69" fill="none" stroke-linecap="round" stroke-linejoin="round" opacity="1"/><path d="M399,288.5 L399.2,280.5 Q404,279.5 403.2,283.5 L399.5,284.5 L404.5,288.5" stroke="#b43ce8" stroke-width="1.69" fill="none" stroke-linecap="round" stroke-linejoin="round" opacity="1"/><path d="M411.5,281 Q406.3,280 406,284.5 Q406.3,289 411.5,288 L411.8,285 L409,285" stroke="#b43ce8" stroke-width="1.69" fill="none" stroke-linecap="round" stroke-linejoin="round" opacity="1"/><path d="M413.6,279.5 L416.8,284.5 L420.3,279 M416.8,284.5 L416.6,290" stroke="#b43ce8" stroke-width="1.69" fill="none" stroke-linecap="round" stroke-linejoin="round" opacity="1"/><path d="M424.6,280 L432.2,279.5 M428.4,279.8 L428.7,289.5" stroke="#b43ce8" stroke-width="1.69" fill="none" stroke-linecap="round" stroke-linejoin="round" opacity="1"/><path d="M432,279.5 L432.2,289 M438.2,279.5 L438.4,289 M432.2,284.2 L438.2,284" stroke="#b43ce8" stroke-width="1.69" fill="none" stroke-linecap="round" stroke-linejoin="round" opacity="1"/><path d="M444.5,280 L439.5,280.3 L439.7,288.5 L444.8,288 M439.6,284.2 L443.6,284" stroke="#b43ce8" stroke-width="1.69" fill="none" stroke-linecap="round" stroke-linejoin="round" opacity="1"/><path d="M448.5,281 Q445,281 445.2,285 Q446,289 449,287.5 Q451.2,284 448.5,281" stroke="#b43ce8" stroke-width="1.69" fill="none" stroke-linecap="round" stroke-linejoin="round" opacity="1"/><path d="M451.5,288.5 L452,281 L454,286 L456.5,281 L457,288.5" stroke="#b43ce8" stroke-width="1.69" fill="none" stroke-linecap="round" stroke-linejoin="round" opacity="1"/><ellipse cx="354.3" cy="301.3" rx="11.5" ry="11" transform="rotate(0 354.3 301.3)" stroke="#8a8a8a" stroke-width="0.6" fill="none" opacity="1"/><ellipse cx="356" cy="303" rx="10" ry="11.5" transform="rotate(25 356 303)" stroke="#999" stroke-width="0.5" fill="none" opacity="1"/><path d="M347.6,294.5 L350.5,306.3 L353.5,298.5 L356.5,306.3 L359.5,294.5" stroke="#1b1b1b" stroke-width="1.82" fill="none" stroke-linecap="round" stroke-linejoin="round" opacity="1"/><path d="M360.5,308 L360.8,301.8 Q363.3,300.4 364,307.8 M368.8,304.5 L365.3,304.6 Q365.2,308 369,307.5 M370.5,302 L375,301.5 M372.3,299.8 L372.8,308" stroke="#1b1b1b" stroke-width="1.43" fill="none" stroke-linecap="round" stroke-linejoin="round" opacity="1"/><path d="M379.5,301 L386.3,300.5 M379.8,304.6 L386.4,304.2" stroke="#1b1b1b" stroke-width="1.69" fill="none" stroke-linecap="round" stroke-linejoin="round" opacity="1"/><path d="M394.7,296.2 L390.2,305.4 L399.4,305 Z" stroke="#1b1b1b" stroke-width="1.56" fill="none" stroke-linecap="round" stroke-linejoin="round" opacity="1"/><path d="M402.6,294.5 L402.4,305.6 M409.5,294.5 L402.8,300.8 L410,305.6" stroke="#1b1b1b" stroke-width="1.82" fill="none" stroke-linecap="round" stroke-linejoin="round" opacity="1"/><path d="M418.5,294.6 L411.2,294.8 L411,305.4 L418.5,305.3 M411.1,300.2 L417,299.8" stroke="#1b1b1b" stroke-width="1.82" fill="none" stroke-linecap="round" stroke-linejoin="round" opacity="1"/><ellipse cx="356" cy="326" rx="15.5" ry="16" transform="rotate(0 356 326)" stroke="#8a8a8a" stroke-width="0.5" fill="none" opacity="0.8"/><ellipse cx="407" cy="322" rx="16" ry="15" transform="rotate(0 407 322)" stroke="#8a8a8a" stroke-width="0.5" fill="none" opacity="0.8"/><path d="M341.5,332.5 L341.8,322.5 Q345,320 346.5,331.5 Q347.3,321 350.6,322 L351,331.5" stroke="#1b1b1b" stroke-width="1.82" fill="none" stroke-linecap="round" stroke-linejoin="round" opacity="1"/><path d="M359.5,323 Q354,322 353.8,327 Q355,329.5 359.5,327.5 M359.5,322.5 Q360.5,331 360.2,334 Q357.5,336.5 354.5,334.5" stroke="#1b1b1b" stroke-width="1.69" fill="none" stroke-linecap="round" stroke-linejoin="round" opacity="1"/><path d="M363.5,332 L363.8,322.8 Q366,320.5 369,322" stroke="#1b1b1b" stroke-width="1.82" fill="none" stroke-linecap="round" stroke-linejoin="round" opacity="1"/><path d="M373.4,322 L381.8,321.3 M373.8,326.6 L382,326" stroke="#1b1b1b" stroke-width="1.69" fill="none" stroke-linecap="round" stroke-linejoin="round" opacity="1"/><path d="M378.5,329 L390,314" stroke="#1b1b1b" stroke-width="0.69" fill="none" stroke-linecap="round" stroke-linejoin="round" opacity="1"/><path d="M392.2,316 L394.3,314.5 L394.6,321.5 M390.5,323.8 L399.4,323.2 M391.2,327.3 Q394.5,324.8 396,327.5 Q395,331 390.8,334 L398.5,333.6" stroke="#1b1b1b" stroke-width="1.56" fill="none" stroke-linecap="round" stroke-linejoin="round" opacity="1"/><path d="M403.2,328.3 L403.4,320.5 Q406,318.4 407.2,327.6 Q408,319.8 410.8,320.5 L411.3,327.8" stroke="#1b1b1b" stroke-width="1.82" fill="none" stroke-linecap="round" stroke-linejoin="round" opacity="1"/><path d="M413,320 L416.4,328 L420.3,318.6" stroke="#1b1b1b" stroke-width="1.82" fill="none" stroke-linecap="round" stroke-linejoin="round" opacity="1"/><path d="M423,316 Q425.6,313.6 428.4,316 Q427.5,318 423.2,320.2 L429,320" stroke="#1b1b1b" stroke-width="1.43" fill="none" stroke-linecap="round" stroke-linejoin="round" opacity="1"/><ellipse cx="358" cy="351" rx="17.5" ry="18.5" transform="rotate(-20 358 351)" stroke="#1b1b1b" stroke-width="0.8" fill="none" opacity="1"/><ellipse cx="360" cy="350" rx="14" ry="17" transform="rotate(-25 360 350)" stroke="#555" stroke-width="0.5" fill="none" opacity="1"/><path d="M347,344.5 L347.3,337.5 Q350,335.5 351.2,344 Q352,336.5 355,337.2 L355.5,344.5 M357.5,337.5 L361,344 L365,336 M366.5,336 Q369.5,334 372,336.3 L367,340.5 L372.5,340" stroke="#1b1b1b" stroke-width="1.56" fill="none" stroke-linecap="round" stroke-linejoin="round" opacity="1"/><path d="M350,349.5 Q362,348.2 373.4,350.2" stroke="#1b1b1b" stroke-width="1.82" fill="none" stroke-linecap="round" stroke-linejoin="round" opacity="1"/><path d="M363.5,362 L363.8,353 Q367,351 373.3,352" stroke="#1b1b1b" stroke-width="1.82" fill="none" stroke-linecap="round" stroke-linejoin="round" opacity="1"/><path d="M379.6,349.2 L387.1,348.2 M380,353.6 L387.3,352.8" stroke="#1b1b1b" stroke-width="1.69" fill="none" stroke-linecap="round" stroke-linejoin="round" opacity="1"/><path d="M393.5,346 Q397,338.5 400.5,342.5 Q399,348 393.5,352 L401.5,351.5" stroke="#1b1b1b" stroke-width="1.69" fill="none" stroke-linecap="round" stroke-linejoin="round" opacity="1"/><path d="M402.5,352 L402.8,344 Q405.6,341.5 407.5,351 Q408,343 411.3,343.6 L411.8,351.5" stroke="#1b1b1b" stroke-width="1.69" fill="none" stroke-linecap="round" stroke-linejoin="round" opacity="1"/><path d="M421,343 Q415.5,342 415,347 Q416,349.5 421,347.5 M421,342.5 Q422.2,352 423,356 Q421,358 417,356.8" stroke="#1b1b1b" stroke-width="1.69" fill="none" stroke-linecap="round" stroke-linejoin="round" opacity="1"/><path d="M394,358 Q405,352 423,355.5" stroke="#1b1b1b" stroke-width="1.17" fill="none" stroke-linecap="round" stroke-linejoin="round" opacity="1"/><path d="M394.5,361.6 Q408,357.5 423,356.5 M397,360 Q410,355.5 422.5,357.5" stroke="#f2a11d" stroke-width="1.56" fill="none" stroke-linecap="round" stroke-linejoin="round" opacity="1"/><path d="M435.2,361.2 L435.6,369.8 L437.7,367.6 L439.6,371 L441,370.2 L439.3,366.8 L442,366.4Z" fill="#2d6aa8"/><path d="M346.6,384.4 L347,398.8 M346.6,384.4 L355.8,384 M347,390.8 L353.5,390.4" stroke="#f2a11d" stroke-width="1.82" fill="none" stroke-linecap="round" stroke-linejoin="round" opacity="1"/><path d="M352.8,395 L360.4,394.4 M356.4,395 L356.8,405.6" stroke="#f2a11d" stroke-width="1.69" fill="none" stroke-linecap="round" stroke-linejoin="round" opacity="1"/><path d="M365.6,390.3 L371.6,389.8 M366,394.4 L371.8,394" stroke="#f2a11d" stroke-width="1.69" fill="none" stroke-linecap="round" stroke-linejoin="round" opacity="1"/><path d="M377.3,390 Q379.5,383.5 383.5,386 Q384,390 377.3,397.5 L384.5,397.2" stroke="#f2a11d" stroke-width="1.82" fill="none" stroke-linecap="round" stroke-linejoin="round" opacity="1"/><path d="M385.5,398 L386,389.5 Q389,386.5 391,397 Q392,388.5 395,389.5 L395.6,398" stroke="#f2a11d" stroke-width="1.82" fill="none" stroke-linecap="round" stroke-linejoin="round" opacity="1"/><path d="M404,390 Q399,389 398.5,394 Q399.5,397 404,395 M404,389.5 Q405.5,401 405.6,404.5 Q402,407 400,403" stroke="#f2a11d" stroke-width="1.82" fill="none" stroke-linecap="round" stroke-linejoin="round" opacity="1"/><path d="M407.4,392.2 L414.5,391.6 M411,386.2 L411.3,398.3" stroke="#f2a11d" stroke-width="1.69" fill="none" stroke-linecap="round" stroke-linejoin="round" opacity="1"/><path d="M415,398.5 L415.5,390 Q418.5,386.8 420.5,397 Q421.3,389 424.5,390 L425,398" stroke="#f2a11d" stroke-width="1.82" fill="none" stroke-linecap="round" stroke-linejoin="round" opacity="1"/><path d="M433,390 Q428,389 427.5,394 Q428.5,397 433,395 M433,389 Q435,398 435.8,403" stroke="#f2a11d" stroke-width="1.82" fill="none" stroke-linecap="round" stroke-linejoin="round" opacity="1"/><path d="M370,412 L376.8,411.6 M370.5,416.8 L377,416.4" stroke="#f2a11d" stroke-width="1.69" fill="none" stroke-linecap="round" stroke-linejoin="round" opacity="1"/><path d="M380.5,409.2 Q386,406 390.5,409.5 Q390,413.5 384.5,415.2 Q392.5,416 391.5,420.5 Q389,424.8 380.5,423.5" stroke="#f2a11d" stroke-width="1.95" fill="none" stroke-linecap="round" stroke-linejoin="round" opacity="1"/><path d="M396,424.5 L396.5,414.5 Q400,410 402.3,423 Q403,413.5 407.5,414 L408,424" stroke="#f2a11d" stroke-width="1.82" fill="none" stroke-linecap="round" stroke-linejoin="round" opacity="1"/><path d="M418,414.5 Q412,413.2 411.5,419 Q412.5,422 418,419.6 M418,414 Q419.8,423 420.2,426" stroke="#f2a11d" stroke-width="1.82" fill="none" stroke-linecap="round" stroke-linejoin="round" opacity="1"/><path d="M378,429 L377.6,403.5 Q380,401.2 395,401.6 L428,401.6 Q436.5,402.5 436.8,412 Q437.2,423 430,425.8 L424,424.5" stroke="#ea1f3b" stroke-width="1.69" fill="none" stroke-linecap="round" stroke-linejoin="round" opacity="1"/><path d="M377.5,431.6 Q400,427.5 429,425.6" stroke="#ea1f3b" stroke-width="1.56" fill="none" stroke-linecap="round" stroke-linejoin="round" opacity="1"/><path d="M405,430.5 Q402,433.5 404,438.5 M408,431 L408.6,438.3 Q413.5,438 414,434.5 Q413,431 408,431 M418,430.5 Q422,433 420.5,438.5 L418,439.5" stroke="#ea1f3b" stroke-width="1.30" fill="none" stroke-linecap="round" stroke-linejoin="round" opacity="1"/></svg>
<div class="a" style="left:622.5px;top:119.5px;width:157.5px;height:349.5px;background:#49484a"></div>
<div class="a" style="left:622.5px;top:119.5px;width:1px;height:349.5px;background:#414042"></div>
<div class="a" style="left:623.8px;top:120.3px;width:66px;height:9.3px;border:0.5px solid #555456;border-bottom:none;background:#4b4a4c"></div>
<div class="k" style="left:628px;top:122.22px;font-size:5.05px;color:#d2d2d2;">Advanced Color Selector</div>
<div class="a" style="left:690px;top:121.2px;width:38.6px;height:7.6px;background:#444345"></div>
<div class="k" style="left:694.4px;top:122.32px;font-size:5.05px;color:#cacaca;">Tool Options</div>
<div class="a" style="left:623.5px;top:129.5px;width:156px;height:0.6px;background:#555456"></div>
<svg class="a" style="left:623.4px;top:129.70000000000002px" width="7.2" height="7.2" viewBox="0 0 7.2 7.2"><circle cx="3.6" cy="3.6" r="3.2" stroke="#c8c8c8" stroke-width="0.7" fill="none"/><path d="M1.6 4.6 Q3.6 2.2 5.6 4.6 Z" fill="#c8c8c8"/></svg>
<div class="k" style="left:633px;top:130.72px;font-size:5.05px;color:#c8c8c8;">Advanced Color Selector</div>
<svg class="a" style="left:763.8px;top:130.3px" width="6" height="6" viewBox="0 0 6 6"><rect x="0.4" y="2" width="3.6" height="3.6" stroke="#c8c8c8" stroke-width="0.7" fill="none"/><path d="M2 2 V0.4 H5.6 V4 H4" stroke="#c8c8c8" stroke-width="0.7" fill="none"/></svg><svg class="a" style="left:773.2px;top:130.9px" width="5" height="5" viewBox="0 0 5 5"><path d="M0.4 0.4 L4.6 4.6 M4.6 0.4 L0.4 4.6" stroke="#c8c8c8" stroke-width="0.8"/></svg>
<svg class="a" style="left:626px;top:140px" width="7" height="6.8" viewBox="0 0 7 6.8"><rect x="0.4" y="0.4" width="6.2" height="6" stroke="#c8c8c8" stroke-width="0.7" fill="none"/><path d="M2.4 0.4 V6.4 M4.4 2 V5" stroke="#c8c8c8" stroke-width="0.7"/></svg>
<svg class="a" style="left:773.2px;top:138.3px" width="5" height="5" viewBox="0 0 5 5"><circle cx="2.5" cy="2.5" r="2.1" stroke="#c8c8c8" stroke-width="0.7" fill="none"/><path d="M1 1 L4 4" stroke="#c8c8c8" stroke-width="0.6"/></svg>
<div class="a" style="left:675px;top:137.2px;width:46px;height:46px;border-radius:50%;background:conic-gradient(from 0deg,#a8c830,#40d840 8%,#20e090 19%,#20c8e0 25%,#2a90e8 33%,#3040e8 41%,#6a30e8 50%,#b030e8 58%,#f020c0 66%,#f02050 71%,#f02020 75%,#f06020 83%,#f0c020 92%,#a8c830);-webkit-mask:radial-gradient(circle,transparent 18.5px,#000 19px);mask:radial-gradient(circle,transparent 18.5px,#000 19px)"></div>
<svg class="a" style="left:681px;top:140.5px" width="34" height="30" viewBox="0 0 34 30"><defs><linearGradient id="tw" x1="0" y1="1" x2="1" y2="0"><stop offset="0" stop-color="#fff"/><stop offset="0.5" stop-color="#d04050"/><stop offset="1" stop-color="#300"/></linearGradient><linearGradient id="tr" x1="0" y1="0" x2="1" y2="0"><stop offset="0" stop-color="#f4f0f0"/><stop offset="1" stop-color="#e0101e"/></linearGradient><linearGradient id="td" x1="0" y1="0" x2="0" y2="1"><stop offset="0" stop-color="#200" stop-opacity="1"/><stop offset="1" stop-color="#200" stop-opacity="0"/></linearGradient></defs><path d="M17 1 L1 29 H33.6Z" fill="url(#tr)"/><path d="M17 1 L1 29 H33.6Z" fill="url(#td)"/></svg>
<div class="a" style="left:623.2px;top:184px;width:149.5px;height:4.5px;background:linear-gradient(90deg,#f012c8 0,#f0148a 15%,#f01050 30%,#f0102a 55%,#f01818 75%,#e8501a 88%,#e06018 100%)"></div>
<div class="a" style="left:623.2px;top:188.5px;width:149.5px;height:4px;background:linear-gradient(90deg,#a86060 0,#c04a5a 20%,#d02040 45%,#f01020 60%,#f01020 100%)"></div>
<div class="a" style="left:623.2px;top:192.5px;width:149.5px;height:4.3px;background:linear-gradient(90deg,#a8101e 0,#b8141e 30%,#f0101e 50%,#f01a2a 70%,#f06070 88%,#f08890 100%)"></div>
<div class="a" style="left:696.8px;top:184px;width:0.7px;height:12.8px;background:#5a3a3a;opacity:0.6"></div><div class="a" style="left:700px;top:184px;width:0.7px;height:12.8px;background:#5a3a3a;opacity:0.6"></div>
<div class="a" style="left:773px;top:143px;width:6.6px;height:7px;background:#f0101e"></div>
<div class="a" style="left:773px;top:150px;width:6.6px;height:7px;background:#f0a018"></div>
<div class="a" style="left:773px;top:157px;width:6.6px;height:6.5px;background:#000"></div>
<div class="a" style="left:773px;top:163.5px;width:6.6px;height:6.5px;background:#b030e8"></div>
<div class="a" style="left:773px;top:170px;width:6.6px;height:6.5px;background:#f0a018"></div>
<div class="a" style="left:773px;top:176.5px;width:6.6px;height:6.5px;background:#f0101e"></div>
<div class="a" style="left:773px;top:183px;width:6.6px;height:6px;background:#2a2a5a"></div>
<div class="a" style="left:773px;top:189px;width:6.6px;height:4px;background:#f0101e"></div>
<div class="a" style="left:773px;top:193px;width:6.6px;height:7px;background:#e01040"></div>
<div class="a" style="left:773px;top:200px;width:6.6px;height:4px;background:#2a3ae8"></div>
<div class="a" style="left:623.5px;top:197.5px;width:149px;height:7px;background:#424143"></div>
<svg class="a" style="left:623.6px;top:198.6px" width="5" height="5" viewBox="0 0 5 5"><circle cx="2.5" cy="2.5" r="2" stroke="#c8c8c8" stroke-width="0.7" fill="none"/></svg>
<div class="a" style="left:700px;top:205.5px;width:6px;height:0.6px;background:#666"></div>
<svg class="a" style="left:623.1999999999999px;top:206.8px" width="7.2" height="7.2" viewBox="0 0 7.2 7.2"><circle cx="3.6" cy="3.6" r="3.2" stroke="#c8c8c8" stroke-width="0.7" fill="none"/><path d="M1.6 4.6 Q3.6 2.2 5.6 4.6 Z" fill="#c8c8c8"/></svg>
<div class="k" style="left:632.5px;top:207.84px;font-size:5.2px;color:#c8c8c8;">Layers</div>
<svg class="a" style="left:763.8px;top:207.4px" width="6" height="6" viewBox="0 0 6 6"><rect x="0.4" y="2" width="3.6" height="3.6" stroke="#c8c8c8" stroke-width="0.7" fill="none"/><path d="M2 2 V0.4 H5.6 V4 H4" stroke="#c8c8c8" stroke-width="0.7" fill="none"/></svg><svg class="a" style="left:773.2px;top:208.0px" width="5" height="5" viewBox="0 0 5 5"><path d="M0.4 0.4 L4.6 4.6 M4.6 0.4 L0.4 4.6" stroke="#c8c8c8" stroke-width="0.8"/></svg>
<div class="a" style="left:623.5px;top:214.6px;width:142px;height:12.4px;background:linear-gradient(#4a494b,#424143);border-top:0.5px solid #555"></div>
<div class="k" style="left:625px;top:218.04px;font-size:5.2px;color:#d0d0d0;">Normal</div>
<svg class="a" style="left:760px;top:220px" width="3.5" height="2.5" viewBox="0 0 3.5 2.5"><path d="M0.3 0.3 L1.75 2 L3.2 0.3" stroke="#aaa" stroke-width="0.6" fill="none"/></svg>
<svg class="a" style="left:769.8px;top:217.2px" width="7" height="8.5" viewBox="0 0 7 8.5"><path d="M0.4 0.4 H6.4 L4 4 V7 L2.8 8 V4Z" stroke="#c8c8c8" stroke-width="0.7" fill="none"/></svg>
<div class="a" style="left:624.2px;top:228.6px;width:135.2px;height:10.4px;background:#567799"></div>
<div class="k" style="left:674.3px;top:231.19px;font-size:5.3px;color:#dfe6ee;">Opacity: &nbsp;100%</div>
<div class="a" style="left:760px;top:228.6px;width:5px;height:10.4px;background:#424143"></div>
<div class="a" style="left:761.5px;top:231px;width:2px;height:0.6px;background:#999"></div><div class="a" style="left:761.5px;top:236.5px;width:2px;height:0.6px;background:#999"></div>
<svg class="a" style="left:770.8px;top:231.3px" width="5" height="5" viewBox="0 0 5 5"><path d="M0.3 0.6 H4.7 M0.3 2.5 H4.7 M0.3 4.4 H4.7" stroke="#c8c8c8" stroke-width="0.9"/></svg>
<div class="a" style="left:623.5px;top:240.6px;width:150px;height:73.6px;background:#3d3c3e"></div>
<div class="a" style="left:641.4px;top:241.1px;width:132px;height:11px;background:#56779a"></div>
<svg class="a" style="left:625.7px;top:243.79999999999998px" width="5.6" height="5.6" viewBox="0 0 5.6 5.6"><path d="M0.3 2.8 Q2.8 0 5.3 2.8 Q2.8 5.6 0.3 2.8Z" fill="#e0e0e0"/><circle cx="2.8" cy="2.6" r="1" fill="#3d3c3e"/></svg>
<svg class="a" style="left:635.2px;top:244.6px" width="4" height="4" viewBox="0 0 4 4"><path d="M0.3 2 L1.5 3.4 L3.7 0.4" stroke="#ddd" stroke-width="0.7" fill="none"/></svg>
<div class="a" style="left:643px;top:242.79999999999998px;width:8.2px;height:7.8px;background:#f4f4f4"></div>
<svg class="a" style="left:643.5px;top:243.29999999999998px" width="7" height="7" viewBox="0 0 7 7"><path d="M1 2 H6 M1 4 L3 5 M4 3 L6 6" stroke="#777" stroke-width="0.5"/></svg>
<svg class="a" style="left:654.5px;top:242.6px" width="4" height="4" viewBox="0 0 4 4"><path d="M0.4 0.6 L3.6 0.4 L3 3.4 L1.5 2.5Z" stroke="#8a8a8a" stroke-width="0.5" fill="none"/></svg>
<div class="k" style="left:661.7px;top:243.94px;font-size:5.4px;color:#e0e0e0;">Paint Layer 2</div>
<svg class="a" style="left:752px;top:244.0px" width="5" height="5" viewBox="0 0 5 5"><path d="M0.5 4.6 H4.5 V2.4 H0.5Z M1.5 2.4 V1 A1 1 0 0 1 3.5 1" stroke="#a9bcd0" stroke-width="0.6" fill="none"/></svg>
<div class="k" style="left:759.6px;top:243.32px;font-size:6px;color:#a9bcd0;">&#945;</div>
<svg class="a" style="left:766.5px;top:243.79999999999998px" width="5.6" height="5.6" viewBox="0 0 5.6 5.6"><circle cx="2.8" cy="2.8" r="2.3" stroke="#a9bcd0" stroke-width="0.6" fill="none"/><circle cx="2.8" cy="2.8" r="0.9" stroke="#a9bcd0" stroke-width="0.5" fill="none"/></svg>
<svg class="a" style="left:625.7px;top:254.8px" width="5.6" height="5.6" viewBox="0 0 5.6 5.6"><circle cx="2.8" cy="2.8" r="2.3" stroke="#7a7a7a" stroke-width="0.6" fill="none"/></svg>
<div class="a" style="left:635px;top:255.10000000000002px;width:5px;height:5px;background:#2e2d2f"></div>
<div class="a" style="left:643px;top:256.35px;width:8.2px;height:2.5px;background:#999"></div>
<svg class="a" style="left:654.5px;top:253.60000000000002px" width="4" height="4" viewBox="0 0 4 4"><path d="M0.4 0.6 L3.6 0.4 L3 3.4 L1.5 2.5Z" stroke="#8a8a8a" stroke-width="0.5" fill="none"/></svg>
<div class="k" style="left:661.7px;top:254.94px;font-size:5.4px;color:#c2c2c2;">1</div>
<svg class="a" style="left:752px;top:255.00000000000003px" width="5" height="5" viewBox="0 0 5 5"><path d="M0.5 4.6 H4.5 V2.4 H0.5Z M1.5 2.4 V1 A1 1 0 0 1 3.5 1" stroke="#8a8a8a" stroke-width="0.6" fill="none"/></svg>
<div class="k" style="left:759.6px;top:254.32px;font-size:6px;color:#8a8a8a;">&#945;</div>
<svg class="a" style="left:766.5px;top:254.8px" width="5.6" height="5.6" viewBox="0 0 5.6 5.6"><circle cx="2.8" cy="2.8" r="2.3" stroke="#8a8a8a" stroke-width="0.6" fill="none"/><circle cx="2.8" cy="2.8" r="0.9" stroke="#8a8a8a" stroke-width="0.5" fill="none"/></svg>
<svg class="a" style="left:625.7px;top:265.59999999999997px" width="5.6" height="5.6" viewBox="0 0 5.6 5.6"><circle cx="2.8" cy="2.8" r="2.3" stroke="#7a7a7a" stroke-width="0.6" fill="none"/></svg>
<div class="a" style="left:635px;top:265.9px;width:5px;height:5px;background:#2e2d2f"></div>
<div class="a" style="left:643px;top:266.15px;width:8.2px;height:4.5px;background:#aaa"></div>
<svg class="a" style="left:654.5px;top:264.4px" width="4" height="4" viewBox="0 0 4 4"><path d="M0.4 0.6 L3.6 0.4 L3 3.4 L1.5 2.5Z" stroke="#8a8a8a" stroke-width="0.5" fill="none"/></svg>
<div class="k" style="left:661.7px;top:265.74px;font-size:5.4px;color:#c2c2c2;">2</div>
<svg class="a" style="left:752px;top:265.79999999999995px" width="5" height="5" viewBox="0 0 5 5"><path d="M0.5 4.6 H4.5 V2.4 H0.5Z M1.5 2.4 V1 A1 1 0 0 1 3.5 1" stroke="#8a8a8a" stroke-width="0.6" fill="none"/></svg>
<div class="k" style="left:759.6px;top:265.12px;font-size:6px;color:#8a8a8a;">&#945;</div>
<svg class="a" style="left:766.5px;top:265.59999999999997px" width="5.6" height="5.6" viewBox="0 0 5.6 5.6"><circle cx="2.8" cy="2.8" r="2.3" stroke="#8a8a8a" stroke-width="0.6" fill="none"/><circle cx="2.8" cy="2.8" r="0.9" stroke="#8a8a8a" stroke-width="0.5" fill="none"/></svg>
<svg class="a" style="left:625.7px;top:276.59999999999997px" width="5.6" height="5.6" viewBox="0 0 5.6 5.6"><circle cx="2.8" cy="2.8" r="2.3" stroke="#7a7a7a" stroke-width="0.6" fill="none"/></svg>
<div class="a" style="left:635px;top:276.9px;width:5px;height:5px;background:#2e2d2f"></div>
<div class="a" style="left:643px;top:278.15px;width:8.2px;height:2.5px;background:#999"></div>
<svg class="a" style="left:654.5px;top:275.4px" width="4" height="4" viewBox="0 0 4 4"><path d="M0.4 0.6 L3.6 0.4 L3 3.4 L1.5 2.5Z" stroke="#8a8a8a" stroke-width="0.5" fill="none"/></svg>
<div class="k" style="left:661.7px;top:276.74px;font-size:5.4px;color:#c2c2c2;">3</div>
<svg class="a" style="left:752px;top:276.79999999999995px" width="5" height="5" viewBox="0 0 5 5"><path d="M0.5 4.6 H4.5 V2.4 H0.5Z M1.5 2.4 V1 A1 1 0 0 1 3.5 1" stroke="#8a8a8a" stroke-width="0.6" fill="none"/></svg>
<div class="k" style="left:759.6px;top:276.12px;font-size:6px;color:#8a8a8a;">&#945;</div>
<svg class="a" style="left:766.5px;top:276.59999999999997px" width="5.6" height="5.6" viewBox="0 0 5.6 5.6"><circle cx="2.8" cy="2.8" r="2.3" stroke="#8a8a8a" stroke-width="0.6" fill="none"/><circle cx="2.8" cy="2.8" r="0.9" stroke="#8a8a8a" stroke-width="0.5" fill="none"/></svg>
<svg class="a" style="left:625.7px;top:287.5px" width="5.6" height="5.6" viewBox="0 0 5.6 5.6"><path d="M0.3 2.8 Q2.8 0 5.3 2.8 Q2.8 5.6 0.3 2.8Z" fill="#e0e0e0"/><circle cx="2.8" cy="2.6" r="1" fill="#3d3c3e"/></svg>
<div class="a" style="left:635px;top:287.8px;width:5px;height:5px;background:#2e2d2f"></div>
<div class="a" style="left:643px;top:289.05px;width:8.2px;height:2.5px;background:#ddd"></div>
<div class="a" style="left:647px;top:289.6px;width:3px;height:1.4px;background:#222"></div>
<svg class="a" style="left:654.5px;top:286.3px" width="4" height="4" viewBox="0 0 4 4"><path d="M0.4 0.6 L3.6 0.4 L3 3.4 L1.5 2.5Z" stroke="#8a8a8a" stroke-width="0.5" fill="none"/></svg>
<div class="k" style="left:661.7px;top:287.64px;font-size:5.4px;color:#c2c2c2;">4</div>
<svg class="a" style="left:752px;top:287.7px" width="5" height="5" viewBox="0 0 5 5"><path d="M0.5 4.6 H4.5 V2.4 H0.5Z M1.5 2.4 V1 A1 1 0 0 1 3.5 1" stroke="#8a8a8a" stroke-width="0.6" fill="none"/></svg>
<div class="k" style="left:759.6px;top:287.02px;font-size:6px;color:#8a8a8a;">&#945;</div>
<svg class="a" style="left:766.5px;top:287.5px" width="5.6" height="5.6" viewBox="0 0 5.6 5.6"><circle cx="2.8" cy="2.8" r="2.3" stroke="#8a8a8a" stroke-width="0.6" fill="none"/><circle cx="2.8" cy="2.8" r="0.9" stroke="#8a8a8a" stroke-width="0.5" fill="none"/></svg>
<svg class="a" style="left:625.7px;top:298.2px" width="5.6" height="5.6" viewBox="0 0 5.6 5.6"><circle cx="2.8" cy="2.8" r="2.3" stroke="#7a7a7a" stroke-width="0.6" fill="none"/></svg>
<div class="a" style="left:635px;top:298.5px;width:5px;height:5px;background:#2e2d2f"></div>
<div class="a" style="left:643px;top:298.75px;width:8.2px;height:4.5px;background:#aaa"></div>
<svg class="a" style="left:654.5px;top:297px" width="4" height="4" viewBox="0 0 4 4"><path d="M0.4 0.6 L3.6 0.4 L3 3.4 L1.5 2.5Z" stroke="#8a8a8a" stroke-width="0.5" fill="none"/></svg>
<div class="k" style="left:661.7px;top:298.34px;font-size:5.4px;color:#c2c2c2;">5</div>
<svg class="a" style="left:752px;top:298.4px" width="5" height="5" viewBox="0 0 5 5"><path d="M0.5 4.6 H4.5 V2.4 H0.5Z M1.5 2.4 V1 A1 1 0 0 1 3.5 1" stroke="#8a8a8a" stroke-width="0.6" fill="none"/></svg>
<div class="k" style="left:759.6px;top:297.72px;font-size:6px;color:#8a8a8a;">&#945;</div>
<svg class="a" style="left:766.5px;top:298.2px" width="5.6" height="5.6" viewBox="0 0 5.6 5.6"><circle cx="2.8" cy="2.8" r="2.3" stroke="#8a8a8a" stroke-width="0.6" fill="none"/><circle cx="2.8" cy="2.8" r="0.9" stroke="#8a8a8a" stroke-width="0.5" fill="none"/></svg>
<svg class="a" style="left:625.7px;top:309.2px" width="5.6" height="5.6" viewBox="0 0 5.6 5.6"><circle cx="2.8" cy="2.8" r="2.3" stroke="#7a7a7a" stroke-width="0.6" fill="none"/></svg>
<div class="a" style="left:635px;top:309.5px;width:5px;height:5px;background:#2e2d2f"></div>
<div class="a" style="left:643px;top:310.75px;width:8.2px;height:2.5px;background:#999"></div>
<svg class="a" style="left:654.5px;top:308px" width="4" height="4" viewBox="0 0 4 4"><path d="M0.4 0.6 L3.6 0.4 L3 3.4 L1.5 2.5Z" stroke="#8a8a8a" stroke-width="0.5" fill="none"/></svg>
<div class="k" style="left:661.7px;top:309.34px;font-size:5.4px;color:#c2c2c2;">6</div>
<svg class="a" style="left:752px;top:309.4px" width="5" height="5" viewBox="0 0 5 5"><path d="M0.5 4.6 H4.5 V2.4 H0.5Z M1.5 2.4 V1 A1 1 0 0 1 3.5 1" stroke="#8a8a8a" stroke-width="0.6" fill="none"/></svg>
<div class="k" style="left:759.6px;top:308.72px;font-size:6px;color:#8a8a8a;">&#945;</div>
<svg class="a" style="left:766.5px;top:309.2px" width="5.6" height="5.6" viewBox="0 0 5.6 5.6"><circle cx="2.8" cy="2.8" r="2.3" stroke="#8a8a8a" stroke-width="0.6" fill="none"/><circle cx="2.8" cy="2.8" r="0.9" stroke="#8a8a8a" stroke-width="0.5" fill="none"/></svg>
<div class="a" style="left:774px;top:240.6px;width:5px;height:73.6px;background:#3a393b"></div>
<svg class="a" style="left:775px;top:243px" width="3" height="2" viewBox="0 0 3 2"><path d="M0.3 1.7 L1.5 0.3 L2.7 1.7" stroke="#aaa" stroke-width="0.5" fill="none"/></svg>
<svg class="a" style="left:775px;top:311px" width="3" height="2" viewBox="0 0 3 2"><path d="M0.3 0.3 L1.5 1.7 L2.7 0.3" stroke="#aaa" stroke-width="0.5" fill="none"/></svg>
<svg class="a" style="left:625.7px;top:316px" width="7.4" height="7.6" viewBox="0 0 7.4 7.6"><path d="M3.7 0.3 V7.3 M0.3 3.8 H7.1" stroke="#d4d4d4" stroke-width="1"/></svg>
<svg class="a" style="left:637px;top:319.5px" width="3" height="2" viewBox="0 0 3 2"><path d="M0.3 0.3 L1.5 1.5 L2.7 0.3" stroke="#999" stroke-width="0.5" fill="none"/></svg>
<svg class="a" style="left:643px;top:316px" width="8.2" height="8.5" viewBox="0 0 8.2 8.5"><rect x="2.5" y="0.4" width="5.3" height="5.8" stroke="#d4d4d4" stroke-width="0.8" fill="none"/><path d="M0.8 2.2 V8 H6" stroke="#d4d4d4" stroke-width="0.8" fill="none"/></svg>
<svg class="a" style="left:656px;top:317.6px" width="8.2" height="4.5" viewBox="0 0 8.2 4.5"><path d="M0.4 0.4 L4.1 4 L7.8 0.4" stroke="#d4d4d4" stroke-width="0.9" fill="none"/></svg>
<svg class="a" style="left:669px;top:317.6px" width="8.2" height="4.5" viewBox="0 0 8.2 4.5"><path d="M0.4 4 L4.1 0.4 L7.8 4" stroke="#d4d4d4" stroke-width="0.9" fill="none"/></svg>
<svg class="a" style="left:682px;top:316.5px" width="8" height="7.5" viewBox="0 0 8 7.5"><path d="M0.3 0.6 H7.7 M0.3 2.6 H7.7 M0.3 4.6 H7.7 M0.3 6.8 H7.7" stroke="#d4d4d4" stroke-width="0.8"/></svg>
<svg class="a" style="left:693.5px;top:319.5px" width="3" height="2" viewBox="0 0 3 2"><path d="M0.3 0.3 L1.5 1.5 L2.7 0.3" stroke="#999" stroke-width="0.5" fill="none"/></svg>
<svg class="a" style="left:769.8px;top:315.8px" width="7.3" height="8.5" viewBox="0 0 7.3 8.5"><path d="M0.3 1.6 H7 M2.6 1.4 V0.4 H4.7 V1.4" stroke="#d4d4d4" stroke-width="0.7" fill="none"/><path d="M1 2.4 H6.3 L5.8 8.2 H1.5Z" fill="#d4d4d4"/></svg>
<div class="a" style="left:700px;top:327px;width:6px;height:0.6px;background:#666"></div>
<svg class="a" style="left:623.4px;top:328.29999999999995px" width="7.2" height="7.2" viewBox="0 0 7.2 7.2"><circle cx="3.6" cy="3.6" r="3.2" stroke="#c8c8c8" stroke-width="0.7" fill="none"/><path d="M1.6 4.6 Q3.6 2.2 5.6 4.6 Z" fill="#c8c8c8"/></svg>
<div class="k" style="left:632.8px;top:329.24px;font-size:5.2px;color:#c8c8c8;">Brush Presets</div>
<svg class="a" style="left:763.8px;top:329px" width="6" height="6" viewBox="0 0 6 6"><rect x="0.4" y="2" width="3.6" height="3.6" stroke="#c8c8c8" stroke-width="0.7" fill="none"/><path d="M2 2 V0.4 H5.6 V4 H4" stroke="#c8c8c8" stroke-width="0.7" fill="none"/></svg><svg class="a" style="left:773.2px;top:329.6px" width="5" height="5" viewBox="0 0 5 5"><path d="M0.4 0.4 L4.6 4.6 M4.6 0.4 L0.4 4.6" stroke="#c8c8c8" stroke-width="0.8"/></svg>
<div class="a" style="left:623.5px;top:336px;width:113px;height:8.4px;background:linear-gradient(#4b4a4c,#444345);border-top:0.5px solid #555"></div>
<svg class="a" style="left:624.8px;top:337.6px" width="5" height="5" viewBox="0 0 5 5"><path d="M2.5 0.2 L3.2 1.9 L4.9 1.9 L3.5 3 L4.1 4.8 L2.5 3.7 L0.9 4.8 L1.5 3 L0.1 1.9 L1.8 1.9Z" fill="#ddd"/></svg>
<div class="k" style="left:631.7px;top:337.44px;font-size:5.4px;color:#cfcfcf;">My Favorites</div>
<svg class="a" style="left:731.5px;top:339.5px" width="3.5" height="2.5" viewBox="0 0 3.5 2.5"><path d="M0.3 0.3 L1.75 2 L3.2 0.3" stroke="#aaa" stroke-width="0.6" fill="none"/></svg>
<div class="a" style="left:739.6px;top:336.5px;width:19.8px;height:7.5px;background:#414042;border:0.5px solid #555"></div>
<svg class="a" style="left:740.2px;top:337px" width="4.5" height="6.5" viewBox="0 0 4.5 6.5"><rect x="0.4" y="0.4" width="3.6" height="5.7" stroke="#d4d4d4" stroke-width="0.7" fill="none"/></svg>
<div class="k" style="left:746px;top:337.54px;font-size:5.2px;color:#cfcfcf;">Tag</div>
<svg class="a" style="left:762px;top:337.5px" width="5.5" height="5" viewBox="0 0 5.5 5"><path d="M0.3 0.6 H5.2 M0.3 2.5 H5.2 M0.3 4.4 H5.2" stroke="#d4d4d4" stroke-width="0.9"/></svg>
<svg class="a" style="left:771px;top:336.5px" width="7" height="7" viewBox="0 0 7 7"><rect x="0.4" y="0.4" width="6.2" height="6.2" stroke="#c8c8c8" stroke-width="0.7" fill="none"/><path d="M3.5 0.5 V3" stroke="#c8c8c8" stroke-width="0.7"/></svg>
<div class="a" style="left:623.5px;top:345.2px;width:150.5px;height:113.5px;background:#3b3a3c"></div>
<div class="a" style="left:624.2px;top:345.4px;width:23.9px;height:15.600000000000023px;background:#d5d4d6"></div>
<div class="k" style="left:651.3px;top:353.04px;font-size:5.2px;color:#cccccc;">b) Basic-5 Size Opacity</div>
<div class="a" style="left:624.2px;top:361.6px;width:23.9px;height:24.0px;background:#d5d4d6"></div>
<div class="k" style="left:651.3px;top:377.54px;font-size:5.2px;color:#cccccc;">c) Pencil-2</div>
<div class="a" style="left:624.2px;top:386.5px;width:23.9px;height:23.5px;background:#d5d4d6"></div>
<div class="k" style="left:651.3px;top:401.54px;font-size:5.2px;color:#cccccc;">d) Ink pen (mypaint)*</div>
<div class="a" style="left:624.2px;top:411px;width:23.9px;height:23px;background:#d5d4d6"></div>
<div class="k" style="left:651.3px;top:426.04px;font-size:5.2px;color:#cccccc;">d) Ink-2 Fineliner*</div>
<div class="a" style="left:623.6px;top:434.2px;width:150px;height:24.00000000000001px;background:#1f3053;border:1px solid #5b87b8"></div>
<div class="a" style="left:624.2px;top:434.8px;width:23.9px;height:22.80000000000001px;background:#90b9da"></div>
<div class="k" style="left:651.3px;top:449.94px;font-size:5.2px;color:#b8c4d4;">d) Ink-3 Gpen*</div>
<svg class="a" style="left:624.2px;top:345.4px" width="24" height="15.6" viewBox="0 0 24 15.6"><path d="M9 4 L15 0" stroke="#222" stroke-width="2.2"/><path d="M9 4 L12 2" stroke="#c04020" stroke-width="1"/><path d="M5 9 Q9 12 12 9 Q16 7 24 10" stroke="#555" stroke-width="0.8" fill="none"/><path d="M14 11 L24 7" stroke="#333" stroke-width="1.5"/></svg>
<svg class="a" style="left:624.2px;top:361.6px" width="24" height="24" viewBox="0 0 24 24"><path d="M10 10 L24 1" stroke="#222" stroke-width="3"/><path d="M13 8 L17 5.5" stroke="#c02a20" stroke-width="1.5"/><path d="M8.5 11.5 L11 9.5" stroke="#f0d0a0" stroke-width="2"/><path d="M6 15 Q4 19 8 19 Q14 18 16 20 Q20 21 24 19" stroke="#444" stroke-width="0.6" fill="none"/></svg>
<svg class="a" style="left:624.2px;top:386.5px" width="24" height="23.5" viewBox="0 0 24 23.5"><path d="M10 13 L24 3" stroke="#3a6ab0" stroke-width="2.4"/><path d="M9 14 L12 12" stroke="#444" stroke-width="1"/><path d="M3 5 L6 2.5" stroke="#333" stroke-width="1.5"/><path d="M2 19 L8 16 M4 20 L12 16 M8 20 L16 17 M13 19 L22 18 M12 16 L18 21" stroke="#333" stroke-width="0.9"/></svg>
<svg class="a" style="left:624.2px;top:411px" width="24" height="23" viewBox="0 0 24 23"><path d="M9 12 L24 1" stroke="#345a90" stroke-width="2.4"/><path d="M8 13 L11 11" stroke="#333" stroke-width="1.2"/><path d="M3 5 L6 2.5" stroke="#333" stroke-width="1.5"/><path d="M7 15 Q5 21 12 20 Q20 19 24 17" stroke="#333" stroke-width="0.9" fill="none"/></svg>
<svg class="a" style="left:624.2px;top:434.8px" width="24" height="22.8" viewBox="0 0 24 22.8"><path d="M11 11 L20 2" stroke="#6a9a60" stroke-width="2.6"/><path d="M10 12 L13 9" stroke="#e0a070" stroke-width="1.5"/><path d="M2 5 L5 2.5" stroke="#2a5a8a" stroke-width="1.5"/><path d="M5 17 L10 12 M7 19 Q12 17 14 19 M12 20 Q18 18 24 16" stroke="#234a7a" stroke-width="0.9" fill="none"/></svg>
<div class="a" style="left:774px;top:345.2px;width:5px;height:113.5px;background:#3a393b"></div>
<svg class="a" style="left:775px;top:347px" width="3" height="2" viewBox="0 0 3 2"><path d="M0.3 1.7 L1.5 0.3 L2.7 1.7" stroke="#aaa" stroke-width="0.5" fill="none"/></svg>
<svg class="a" style="left:775px;top:455px" width="3" height="2" viewBox="0 0 3 2"><path d="M0.3 0.3 L1.5 1.7 L2.7 0.3" stroke="#aaa" stroke-width="0.5" fill="none"/></svg>
<div class="a" style="left:623.8px;top:459.5px;width:116px;height:8.6px;background:#3d3c3e"></div>
<div class="k" style="left:625.2px;top:461.04px;font-size:5.2px;color:#7a7a7a;">Search</div>
<svg class="a" style="left:743.5px;top:461px" width="4" height="3.5" viewBox="0 0 4 3.5"><path d="M0.3 1.8 L1.5 3.2 L3.7 0.3" stroke="#ddd" stroke-width="0.7" fill="none"/></svg>
<div class="k" style="left:749px;top:461.04px;font-size:5.2px;color:#cfcfcf;">Filter in Tag</div>
<div class="a" style="left:905px;top:66.6px;width:112px;height:63.2px;border-radius:2px;overflow:hidden;background:#c4beb6"><div class="a" style="left:0;top:0;width:40.5px;height:63.2px;background:repeating-linear-gradient(165deg,#dcdcdc 0 1.8px,#bdbdbd 1.8px 2.8px)"></div><div class="a" style="left:0;top:0;width:40.5px;height:63.2px;background:radial-gradient(ellipse 90% 60% at 25% 12%,rgba(255,255,255,1) 0,rgba(255,255,255,0.7) 40%,rgba(255,255,255,0) 100%)"></div><div class="a" style="left:40.5px;top:0;width:3px;height:63.2px;background:#d6d2cc"></div><div class="a" style="left:43.5px;top:0;width:44px;height:63.2px;background:linear-gradient(#b9b2aa,#c9c3bb 40%,#cfcac4)"></div><div class="a" style="left:48px;top:10px;width:30px;height:54px;background:#d7d3ce"></div><div class="a" style="left:87.5px;top:0;width:24.5px;height:63.2px;background:linear-gradient(90deg,#b8b3a8,#a9a69c)"></div><div class="a" style="left:90px;top:8px;width:22px;height:10px;background:#8c7b72;opacity:0.5"></div><div class="a" style="left:74.5px;top:25.8px;width:14.2px;height:32.5px;background:#e8eef2"></div><div class="a" style="left:77px;top:29px;width:9px;height:7px;background:#3c8fc8"></div><div class="a" style="left:76px;top:41px;width:11px;height:11px;background:#58a8d8"></div><div class="a" style="left:79px;top:43px;width:5px;height:8px;background:#e0a030"></div><div class="a" style="left:38px;top:53px;width:56px;height:12px;background:#272a28;border-radius:10px 10px 0 0"></div><div class="a" style="left:54px;top:48px;width:16px;height:8px;background:#b88070"></div><div class="a" style="left:43px;top:15px;width:32px;height:24px;border-radius:50% 50% 30% 30%;background:#2a2624"></div><div class="a" style="left:47px;top:21px;width:23.5px;height:32px;border-radius:42% 42% 46% 46%;background:#d09684"></div><div class="a" style="left:46px;top:15.5px;width:27px;height:9px;border-radius:50% 50% 20% 20%;background:#2e2a26"></div><div class="a" style="left:42.5px;top:27.5px;width:5px;height:14px;border-radius:2px;background:#1e1e1e"></div><div class="a" style="left:70px;top:27.5px;width:5px;height:14px;border-radius:2px;background:#1e1e1e"></div><div class="a" style="left:51px;top:34px;width:5px;height:1.5px;background:#6a4a40"></div><div class="a" style="left:61px;top:34px;width:5px;height:1.5px;background:#6a4a40"></div></div>
<div class="a" style="left:792.5px;top:129.6px;width:113.3px;height:63.8px;border:1.5px solid #22c46c;overflow:hidden;background:#140404"><div class="a" style="left:0;top:0;width:111px;height:61px;background:radial-gradient(ellipse 16% 12% at 18% 14%,#a01c10 0,rgba(160,30,10,0) 100%),radial-gradient(ellipse 10% 14% at 82% 6%,#901810 0,rgba(160,30,10,0) 100%),radial-gradient(ellipse 35% 35% at 50% 25%,#3a0a06 0,rgba(60,10,5,0) 100%),radial-gradient(ellipse 12% 14% at 24% 90%,#a01810 0,rgba(160,30,10,0) 100%),radial-gradient(ellipse 10% 20% at 85% 85%,#901810 0,rgba(160,30,10,0) 100%)"></div><svg class="a" style="left:0;top:0" width="111" height="61" viewBox="0 0 111 61"><path d="M0 43 Q20 46 35 42 Q45 36 50 28 M60 30 Q70 40 85 42 Q100 44 111 40" stroke="#b02010" stroke-width="3" fill="none" opacity="0.8"/><path d="M0 37 Q18 30 30 32 M75 32 Q95 28 111 34" stroke="#701408" stroke-width="2" fill="none" opacity="0.8"/><path d="M30 42 Q40 40 47 30" stroke="#f06018" stroke-width="3" fill="none"/><path d="M38 22 Q52 0 56 2 Q62 0 72 22" stroke="#5a0e08" stroke-width="2" fill="none"/></svg><div class="a" style="left:51px;top:21px;width:21px;height:14px;border-radius:50% 50% 20% 20%;background:#5a4e4e"></div><div class="a" style="left:52.6px;top:24px;width:16.7px;height:20px;border-radius:45%;background:#e0b8aa"></div><div class="a" style="left:34.7px;top:40px;width:51.3px;height:25px;border-radius:45% 45% 0 0 / 70% 70% 0 0;background:#d4d2d0"></div><div class="a" style="left:50px;top:39px;width:21px;height:8px;border-radius:0 0 10px 10px;background:#e2dedc"></div></div>
<div class="a" style="left:829.3px;top:79.3px;width:39.5px;height:38.7px;border-radius:4px;overflow:hidden;background:#515559"><div class="a" style="left:0;top:0;width:40px;height:6px;background:#1c2027"></div><div class="a" style="left:8px;top:0.5px;width:24px;height:4px;background:#2c4c62;border-radius:1px"></div><div class="a" style="left:14px;top:1px;width:10px;height:2.5px;background:#3a7aa0"></div><div class="a" style="left:0;top:5px;width:40px;height:8px;background:linear-gradient(#3c4044,#55595d);clip-path:polygon(12% 0,88% 0,100% 100%,0 100%)"></div><div class="a" style="left:3px;top:12px;width:34px;height:13px;background:repeating-linear-gradient(90deg,#676b6f 0 2.5px,#55595d 2.5px 3.5px)"></div><div class="a" style="left:13px;top:12px;width:14px;height:8px;background:#7c7f82"></div><div class="a" style="left:0;top:25px;width:40px;height:14px;background:repeating-linear-gradient(0deg,#4e5256 0 2px,#5a5e62 2px 3px),#55595d"></div><div class="a" style="left:4px;top:20px;width:5px;height:3px;background:#2a3a70"></div><div class="a" style="left:12px;top:19px;width:3px;height:3px;background:#303030"></div><div class="a" style="left:15px;top:19.5px;width:3px;height:3px;background:#c02828"></div><div class="a" style="left:18px;top:19.5px;width:3px;height:3px;background:#d04020"></div><div class="a" style="left:21px;top:19.5px;width:3px;height:3px;background:#d0c020"></div><div class="a" style="left:24px;top:19.5px;width:3px;height:3px;background:#28a840"></div><div class="a" style="left:31px;top:20px;width:4px;height:4px;background:#5a2a90"></div><div class="a" style="left:18.5px;top:25px;width:3px;height:3px;background:#303030"></div><div class="a" style="left:18px;top:27.5px;width:4px;height:4px;background:#d040b8"></div><div class="a" style="left:6px;top:32px;width:7px;height:3px;background:#4a8a58"></div><div class="a" style="left:30px;top:31px;width:5px;height:4px;background:#2a7a3a"></div></div>
<div class="a" style="left:829.5px;top:204.8px;width:39.4px;height:39.2px;border-radius:4px;background:#242424"></div>
<div class="a" style="left:829.5px;top:268px;width:39px;height:39.7px;border-radius:4px;background:#485968"></div>
<div class="t" style="left:849px;top:288px;transform:translate(-50%,-50%);font-size:21px;color:#f4f4f4;line-height:1">J</div>
<div class="a" style="left:942px;top:331px;width:39px;height:39.3px;border-radius:4px;background:#0b0c0b"></div>
<div class="a" style="left:942.8px;top:456.5px;width:37px;height:40px;border-radius:4px;overflow:hidden;background:#3aa6d6"><div class="a" style="left:0;top:0;width:37px;height:40px;background:radial-gradient(ellipse 40% 35% at 15% 20%,#3a6c8c 0,rgba(58,108,140,0) 100%),radial-gradient(ellipse 40% 30% at 90% 85%,#d8eef8 0,rgba(216,238,248,0) 100%),linear-gradient(170deg,#4a8ab0 0,#38b0e0 45%,#44c0ec 70%,#9ad4ee 100%)"></div><div class="a" style="left:16px;top:1px;width:20px;height:22px;border-radius:45% 45% 40% 50%;background:#e6cc94"></div><div class="a" style="left:19px;top:4px;width:13px;height:15px;border-radius:45% 45% 50% 50%;background:#d9a27a"></div><div class="a" style="left:31px;top:18px;width:5px;height:16px;border-radius:3px;background:#c89048"></div><div class="a" style="left:21px;top:9.5px;width:3.5px;height:1.3px;background:#503020"></div><div class="a" style="left:26.5px;top:9.5px;width:3.5px;height:1.3px;background:#503020"></div><div class="a" style="left:23px;top:14.5px;width:4.5px;height:1.3px;background:#a04050"></div><div class="a" style="left:4px;top:19px;width:26px;height:14px;border-radius:50%;background:#3cc4ee"></div><div class="a" style="left:13px;top:22px;width:9px;height:4px;border-radius:5px 5px 0 0;background:#e4f4fa"></div><div class="a" style="left:12px;top:30px;width:12px;height:3px;background:repeating-linear-gradient(90deg,#f0f8fc 0 1.5px,#204060 1.5px 2.5px)"></div><div class="a" style="left:0;top:32px;width:18px;height:8px;background:#3a3048"></div><div class="a" style="left:6px;top:35px;width:10px;height:5px;background:#8a4a80"></div></div>
<div class="gname" style="left:961px;top:162px">Haoling</div>
<div class="gname" style="left:961px;top:224.5px">&#923; Modi &#923;</div>
<div class="gname" style="left:961px;top:288px">Allan Zhang</div>
<div class="gname" style="left:849px;top:350.7px">Phil Feng</div>
<div class="gname" style="left:849px;top:413.9px">bryan 1</div>
<div class="gname" style="left:961px;top:413.6px">Alexander &nbsp;Lebe...</div>
<div class="gname" style="left:849px;top:476.5px">al</div>
<div class="a tag" style="left:795px;top:119.5px;width:42px"><svg class="a" style="left:1.6px;top:1.2px" width="7" height="7.5" viewBox="0 0 7 7.5"><rect x="3" y="0.4" width="2.2" height="4.2" rx="1.1" fill="#e4303e" transform="rotate(20 4.1 2.5)"/><path d="M1.9 3.6 Q2 6 4 6 Q5.6 6 6 4.2 M3.6 6 L3.2 7.2 M0.6 6.8 L6.4 0.8" stroke="#e4303e" stroke-width="0.9" fill="none" stroke-linecap="round"/></svg><span class="t" style="left:11px;top:1.6px">Arjun Ram</span></div>
<div class="a tag" style="left:906.5px;top:119.5px;width:49px"><svg class="a" style="left:1.6px;top:1.2px" width="7" height="7.5" viewBox="0 0 7 7.5"><rect x="3" y="0.4" width="2.2" height="4.2" rx="1.1" fill="#e4303e" transform="rotate(20 4.1 2.5)"/><path d="M1.9 3.6 Q2 6 4 6 Q5.6 6 6 4.2 M3.6 6 L3.2 7.2 M0.6 6.8 L6.4 0.8" stroke="#e4303e" stroke-width="0.9" fill="none" stroke-linecap="round"/></svg><span class="t" style="left:11px;top:1.6px">Anthony Cao</span></div>
<div class="a tag" style="left:794.5px;top:183.3px;width:23.5px;background:rgba(30,30,32,0.8)"><span class="t" style="left:1.5px;top:1.6px">Yufei Y</span></div>
<div class="a tag" style="left:908px;top:183.3px;width:33px"><svg class="a" style="left:1.6px;top:1.2px" width="7" height="7.5" viewBox="0 0 7 7.5"><rect x="3" y="0.4" width="2.2" height="4.2" rx="1.1" fill="#e4303e" transform="rotate(20 4.1 2.5)"/><path d="M1.9 3.6 Q2 6 4 6 Q5.6 6 6 4.2 M3.6 6 L3.2 7.2 M0.6 6.8 L6.4 0.8" stroke="#e4303e" stroke-width="0.9" fill="none" stroke-linecap="round"/></svg><span class="t" style="left:11px;top:1.6px">Haoling</span></div>
<div class="a tag" style="left:795px;top:245.5px;width:29px"><svg class="a" style="left:1.6px;top:1.2px" width="7" height="7.5" viewBox="0 0 7 7.5"><rect x="3" y="0.4" width="2.2" height="4.2" rx="1.1" fill="#e4303e" transform="rotate(20 4.1 2.5)"/><path d="M1.9 3.6 Q2 6 4 6 Q5.6 6 6 4.2 M3.6 6 L3.2 7.2 M0.6 6.8 L6.4 0.8" stroke="#e4303e" stroke-width="0.9" fill="none" stroke-linecap="round"/></svg><span class="t" style="left:11px;top:1.6px">nicole</span></div>
<div class="a tag" style="left:907px;top:245.5px;width:40px"><svg class="a" style="left:1.6px;top:1.2px" width="7" height="7.5" viewBox="0 0 7 7.5"><rect x="3" y="0.4" width="2.2" height="4.2" rx="1.1" fill="#e4303e" transform="rotate(20 4.1 2.5)"/><path d="M1.9 3.6 Q2 6 4 6 Q5.6 6 6 4.2 M3.6 6 L3.2 7.2 M0.6 6.8 L6.4 0.8" stroke="#e4303e" stroke-width="0.9" fill="none" stroke-linecap="round"/></svg><span class="t" style="left:11px;top:1.6px">&#923; Modi &#923;</span></div>
<div class="a tag" style="left:795px;top:308.3px;width:39.5px"><svg class="a" style="left:1.6px;top:1.2px" width="7" height="7.5" viewBox="0 0 7 7.5"><rect x="3" y="0.4" width="2.2" height="4.2" rx="1.1" fill="#e4303e" transform="rotate(20 4.1 2.5)"/><path d="M1.9 3.6 Q2 6 4 6 Q5.6 6 6 4.2 M3.6 6 L3.2 7.2 M0.6 6.8 L6.4 0.8" stroke="#e4303e" stroke-width="0.9" fill="none" stroke-linecap="round"/></svg><span class="t" style="left:11px;top:1.6px">Jeffrey Yu</span></div>
<div class="a tag" style="left:907px;top:308.3px;width:46px"><svg class="a" style="left:1.6px;top:1.2px" width="7" height="7.5" viewBox="0 0 7 7.5"><rect x="3" y="0.4" width="2.2" height="4.2" rx="1.1" fill="#e4303e" transform="rotate(20 4.1 2.5)"/><path d="M1.9 3.6 Q2 6 4 6 Q5.6 6 6 4.2 M3.6 6 L3.2 7.2 M0.6 6.8 L6.4 0.8" stroke="#e4303e" stroke-width="0.9" fill="none" stroke-linecap="round"/></svg><span class="t" style="left:11px;top:1.6px">Allan Zhang</span></div>
<div class="a tag" style="left:795px;top:371.5px;width:38px"><svg class="a" style="left:1.6px;top:1.2px" width="7" height="7.5" viewBox="0 0 7 7.5"><rect x="3" y="0.4" width="2.2" height="4.2" rx="1.1" fill="#e4303e" transform="rotate(20 4.1 2.5)"/><path d="M1.9 3.6 Q2 6 4 6 Q5.6 6 6 4.2 M3.6 6 L3.2 7.2 M0.6 6.8 L6.4 0.8" stroke="#e4303e" stroke-width="0.9" fill="none" stroke-linecap="round"/></svg><span class="t" style="left:11px;top:1.6px">Phil Feng</span></div>
<div class="a tag" style="left:907px;top:371.5px;width:50.5px"><svg class="a" style="left:1.6px;top:1.2px" width="7" height="7.5" viewBox="0 0 7 7.5"><rect x="3" y="0.4" width="2.2" height="4.2" rx="1.1" fill="#e4303e" transform="rotate(20 4.1 2.5)"/><path d="M1.9 3.6 Q2 6 4 6 Q5.6 6 6 4.2 M3.6 6 L3.2 7.2 M0.6 6.8 L6.4 0.8" stroke="#e4303e" stroke-width="0.9" fill="none" stroke-linecap="round"/></svg><span class="t" style="left:11px;top:1.6px">Bowen Zhang</span></div>
<div class="a tag" style="left:795px;top:434.6px;width:34px"><svg class="a" style="left:1.6px;top:1.2px" width="7" height="7.5" viewBox="0 0 7 7.5"><rect x="3" y="0.4" width="2.2" height="4.2" rx="1.1" fill="#e4303e" transform="rotate(20 4.1 2.5)"/><path d="M1.9 3.6 Q2 6 4 6 Q5.6 6 6 4.2 M3.6 6 L3.2 7.2 M0.6 6.8 L6.4 0.8" stroke="#e4303e" stroke-width="0.9" fill="none" stroke-linecap="round"/></svg><span class="t" style="left:11px;top:1.6px">bryan 1</span></div>
<div class="a tag" style="left:907px;top:434.6px;width:73px"><svg class="a" style="left:1.6px;top:1.2px" width="7" height="7.5" viewBox="0 0 7 7.5"><rect x="3" y="0.4" width="2.2" height="4.2" rx="1.1" fill="#e4303e" transform="rotate(20 4.1 2.5)"/><path d="M1.9 3.6 Q2 6 4 6 Q5.6 6 6 4.2 M3.6 6 L3.2 7.2 M0.6 6.8 L6.4 0.8" stroke="#e4303e" stroke-width="0.9" fill="none" stroke-linecap="round"/></svg><span class="t" style="left:11px;top:1.6px">Alexander Lebedinsky</span></div>
<div class="a tag" style="left:795px;top:497.2px;width:17px"><svg class="a" style="left:1.6px;top:1.2px" width="7" height="7.5" viewBox="0 0 7 7.5"><rect x="3" y="0.4" width="2.2" height="4.2" rx="1.1" fill="#e4303e" transform="rotate(20 4.1 2.5)"/><path d="M1.9 3.6 Q2 6 4 6 Q5.6 6 6 4.2 M3.6 6 L3.2 7.2 M0.6 6.8 L6.4 0.8" stroke="#e4303e" stroke-width="0.9" fill="none" stroke-linecap="round"/></svg><span class="t" style="left:11px;top:1.6px">al</span></div>
<div class="a tag" style="left:907px;top:497.2px;width:31px"><svg class="a" style="left:1.6px;top:1.2px" width="7" height="7.5" viewBox="0 0 7 7.5"><rect x="3" y="0.4" width="2.2" height="4.2" rx="1.1" fill="#e4303e" transform="rotate(20 4.1 2.5)"/><path d="M1.9 3.6 Q2 6 4 6 Q5.6 6 6 4.2 M3.6 6 L3.2 7.2 M0.6 6.8 L6.4 0.8" stroke="#e4303e" stroke-width="0.9" fill="none" stroke-linecap="round"/></svg><span class="t" style="left:11px;top:1.6px">Bowen</span></div>
<div class="a" style="left:0;top:546px;width:1024px;height:30px;background:#000"></div>
<div class="a" style="left:24px;top:575px;width:144px;height:1px;background:#d8d8d8"></div>
<div class="a" style="left:218px;top:575px;width:25px;height:1px;background:#555"></div>
<svg class="a" style="left:21.5px;top:551.5px;" width="10" height="11" viewBox="0 0 10 11"><rect x="3.2" y="0.6" width="3.8" height="6.2" rx="1.9" stroke="#e2e2e2" stroke-width="0.95" fill="none"/><path d="M1.6 4.6 Q1.6 8.4 5.1 8.4 Q8.6 8.4 8.6 4.6 M5.1 8.4 V10.4 M3 10.4 H7.2" stroke="#e2e2e2" stroke-width="0.95" fill="none"/><path d="M0.8 10.6 L9.6 1" stroke="#e8203a" stroke-width="1.1"/></svg>
<div class="tb" style="left:26.3px;top:567.2px;color:#e6e6e6">Audio</div>
<svg class="a" style="left:40px;top:555.6px;" width="4" height="2.5" viewBox="0 0 4 2.5"><path d="M0.4 2.1 L2 0.5 L3.6 2.1" stroke="#d0d0d0" stroke-width="0.95" fill="none"/></svg>
<svg class="a" style="left:67px;top:553px;" width="12" height="8" viewBox="0 0 12 8"><rect x="0.5" y="0.6" width="7.6" height="6.8" rx="1.5" stroke="#e2e2e2" stroke-width="1" fill="none"/><path d="M8.4 3 L11.3 1.2 V6.8 L8.4 5" stroke="#e2e2e2" stroke-width="1" fill="none"/></svg>
<div class="tb" style="left:72.7px;top:567.2px;color:#e6e6e6">Video</div>
<svg class="a" style="left:88.8px;top:555.6px;" width="4" height="2.5" viewBox="0 0 4 2.5"><path d="M0.4 2.1 L2 0.5 L3.6 2.1" stroke="#d0d0d0" stroke-width="0.95" fill="none"/></svg>
<svg class="a" style="left:344.5px;top:551.5px;" width="12" height="11" viewBox="0 0 12 11"><circle cx="4" cy="2.6" r="2" stroke="#e2e2e2" stroke-width="0.95" fill="none"/><path d="M0.6 9.8 Q0.6 6 4 6 Q7.4 6 7.4 9.8Z" stroke="#e2e2e2" stroke-width="0.95" fill="none"/><circle cx="8.6" cy="4.4" r="1.6" stroke="#e2e2e2" stroke-width="0.95" fill="none"/><path d="M7.4 7.2 Q11.2 6.8 11.2 10 H7.8" stroke="#e2e2e2" stroke-width="0.95" fill="none"/></svg>
<div class="t" style="left:359px;top:554.3px;font-size:5.2px;color:#cfcfcf">14</div>
<div class="tb" style="left:350px;top:567.2px;color:#e6e6e6">Participants</div>
<svg class="a" style="left:374.5px;top:555.6px;" width="4" height="2.5" viewBox="0 0 4 2.5"><path d="M0.4 2.1 L2 0.5 L3.6 2.1" stroke="#d0d0d0" stroke-width="0.95" fill="none"/></svg>
<svg class="a" style="left:399.5px;top:551.5px;" width="11" height="11" viewBox="0 0 11 11"><rect x="2.6" y="0.6" width="7.8" height="6.2" rx="3" stroke="#e2e2e2" stroke-width="0.95" fill="none"/><path d="M0.6 4.2 V7 Q0.6 9.6 3.4 9.6 H6.4 L8.6 10.8 V9 Q8 8.4 8 7.6" stroke="#e2e2e2" stroke-width="0.95" fill="none"/><rect x="0.6" y="3.8" width="7.8" height="5.8" rx="2.8" fill="#000" stroke="#e2e2e2" stroke-width="0.95"/><path d="M2.6 6.2 H6.5" stroke="#e2e2e2" stroke-width="0.7"/></svg>
<div class="tb" style="left:405px;top:567.2px;color:#e6e6e6">Chat</div>
<svg class="a" style="left:419.7px;top:555.6px;" width="4" height="2.5" viewBox="0 0 4 2.5"><path d="M0.4 2.1 L2 0.5 L3.6 2.1" stroke="#d0d0d0" stroke-width="0.95" fill="none"/></svg>
<svg class="a" style="left:442px;top:552px;" width="12" height="10" viewBox="0 0 12 10"><path d="M6 9.4 L1.6 5.2 Q0.2 3.6 1 2 Q2.2 0.2 4.2 0.8 Q5.2 1.2 6 2.4 Q6.8 1.2 7.8 0.8 Q9.8 0.2 11 2 Q11.8 3.6 10.4 5.2Z" stroke="#e2e2e2" stroke-width="1" fill="none"/></svg>
<div class="tb" style="left:448px;top:567.2px;color:#e6e6e6">React</div>
<svg class="a" style="left:459.5px;top:555.6px;" width="4" height="2.5" viewBox="0 0 4 2.5"><path d="M0.4 2.1 L2 0.5 L3.6 2.1" stroke="#d0d0d0" stroke-width="0.95" fill="none"/></svg>
<div class="a" style="left:486.3px;top:551px;width:12px;height:11.5px;background:#1fc560;border-radius:2px"></div>
<svg class="a" style="left:488.3px;top:552.8px;" width="8" height="8" viewBox="0 0 8 8"><path d="M4 7.4 V2 M1.4 4.4 L4 1.2 L6.6 4.4" stroke="#000" stroke-width="1.3" fill="none"/></svg>
<div class="tb" style="left:492.3px;top:567.2px;color:#e6e6e6">Share</div>
<svg class="a" style="left:534.5px;top:550.5px;" width="12" height="12" viewBox="0 0 12 12"><path d="M5.5 1.5 Q6 6 10.5 6.5 Q6 7 5.5 11.5 Q5 7 0.5 6.5 Q5 6 5.5 1.5Z" fill="#cfe4f4" stroke="#e8f0f8" stroke-width="0.5"/><path d="M9.6 0.5 Q9.8 2.2 11.5 2.4 Q9.8 2.6 9.6 4.3 Q9.4 2.6 7.7 2.4 Q9.4 2.2 9.6 0.5Z" fill="#e8f0f8"/></svg>
<div class="tb" style="left:540.6px;top:567.2px;color:#e6e6e6">AI Companion</div>
<svg class="a" style="left:582px;top:550.8px;" width="13" height="13" viewBox="0 0 13 13"><circle cx="6.5" cy="6.5" r="5.8" stroke="#e2e2e2" stroke-width="1" fill="none"/><path d="M6.5 5.4 V9.6" stroke="#e2e2e2" stroke-width="1.1"/><circle cx="6.5" cy="3.7" r="0.7" fill="#e2e2e2"/></svg>
<div class="tb" style="left:588.4px;top:567.2px;color:#e6e6e6">Meeting info</div>
<svg class="a" style="left:628px;top:551.5px;" width="11" height="11" viewBox="0 0 11 11"><circle cx="3" cy="8" r="2.2" stroke="#e2e2e2" stroke-width="0.95" fill="none"/><circle cx="8" cy="3" r="2.2" stroke="#e2e2e2" stroke-width="0.95" fill="none"/><path d="M0.8 3.6 V2.2 Q0.8 0.8 2.2 0.8 H3.6 M10.2 7.4 V8.8 Q10.2 10.2 8.8 10.2 H7.4" stroke="#e2e2e2" stroke-width="0.95" fill="none"/></svg>
<div class="tb" style="left:633.6px;top:567.2px;color:#e6e6e6">Apps</div>
<svg class="a" style="left:673.5px;top:551.8px;" width="24" height="11" viewBox="0 0 24 11"><rect x="0.6" y="0.6" width="10.8" height="9.8" rx="2.5" stroke="#e2e2e2" stroke-width="1" fill="none"/><rect x="12.2" y="0.6" width="10.8" height="9.8" rx="2.5" stroke="#e2e2e2" stroke-width="1" fill="none"/><path d="M4.8 3.6 V7.4 M7.2 3.6 V7.4" stroke="#e2e2e2" stroke-width="1.1"/><rect x="15.4" y="3.4" width="4.4" height="4.2" fill="#e2e2e2"/></svg>
<div class="tb" style="left:685.5px;top:567.2px;color:#8e8e8e">Pause/stop recording</div>
<svg class="a" style="left:732.2px;top:550.8px;" width="13" height="13" viewBox="0 0 13 13"><circle cx="6.5" cy="6.5" r="5.8" stroke="#e2e2e2" stroke-width="1" fill="none"/><circle cx="4.2" cy="6.5" r="0.6" fill="#e2e2e2"/><circle cx="6.5" cy="6.5" r="0.6" fill="#e2e2e2"/><circle cx="8.8" cy="6.5" r="0.6" fill="#e2e2e2"/></svg>
<div class="tb" style="left:738.7px;top:567.2px;color:#e6e6e6">More</div>
<svg class="a" style="left:994px;top:550.8px;" width="14" height="13.5" viewBox="0 0 14 13.5"><path d="M5 0.6 H13 V11.6 H9.5" stroke="#e0203a" stroke-width="1" fill="none"/><path d="M8 1.4 L11 3 V12.8 L8 11.2Z" fill="#c8182e"/><circle cx="3.4" cy="3.2" r="1.7" fill="#e8e8e8"/><path d="M1.6 5.4 H5.4 L6.6 7.6 L5.2 8.2 V10.4 L6.2 12.6 H4.4 L3.4 10.6 L2.4 12.6 H0.6 L1.6 10.2 V8 L0.4 7.6Z" fill="#e8e8e8"/><path d="M2.4 6.8 V9.6 M4.4 6.8 V9.6" stroke="#000" stroke-width="0.5"/></svg>
<div class="tb" style="left:1000.4px;top:567.2px;color:#e6e6e6">Leave</div>
</body></html>
